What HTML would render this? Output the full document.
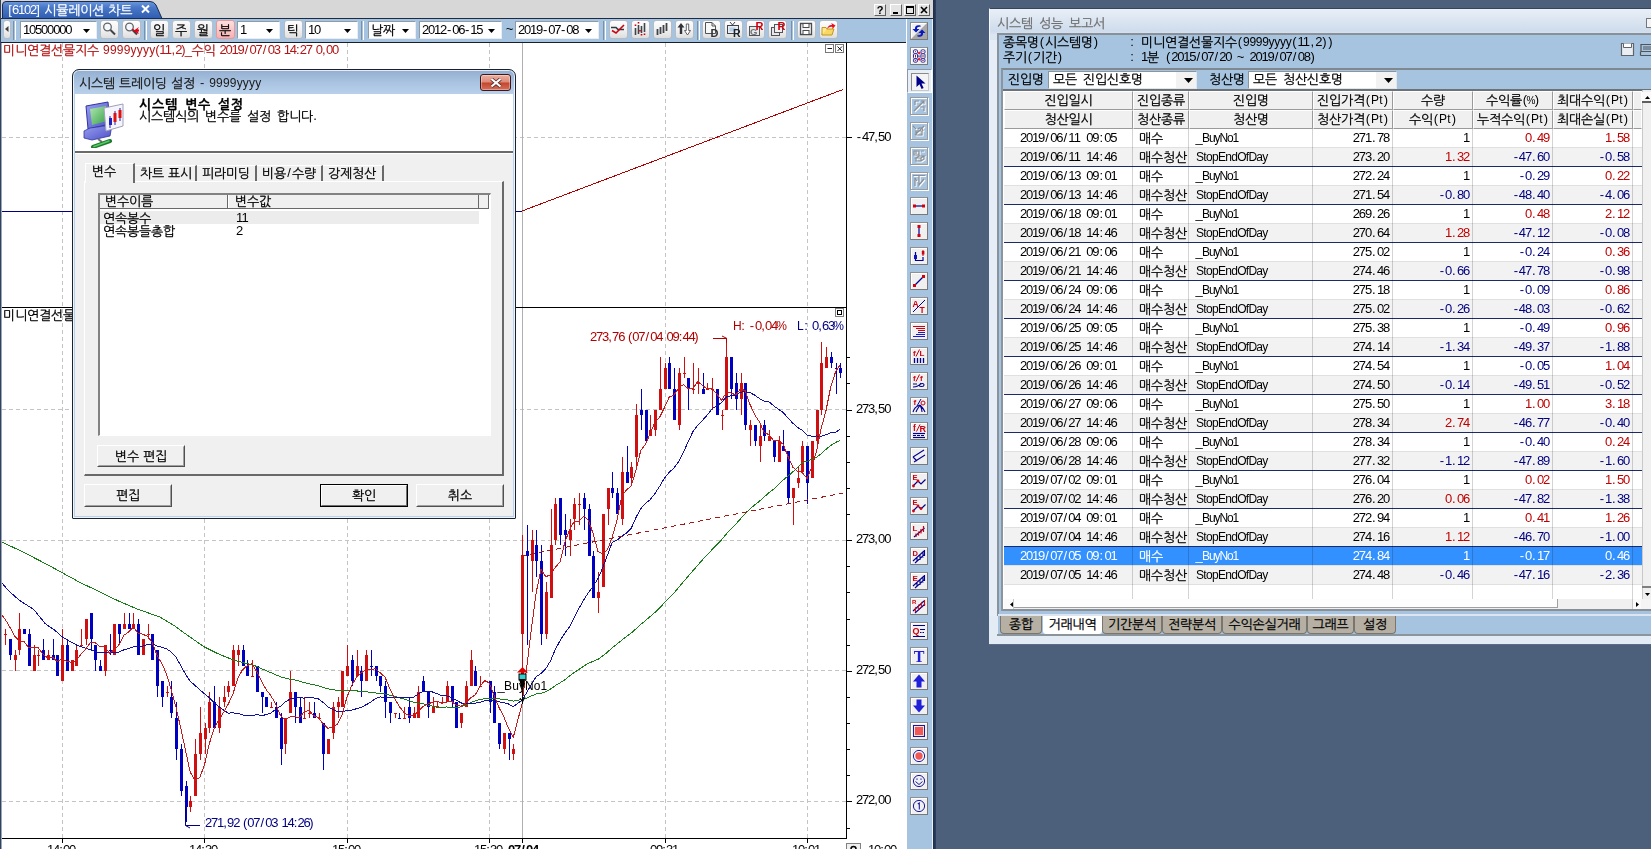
<!DOCTYPE html>
<html lang="ko"><head><meta charset="utf-8"><title>시뮬레이션 차트</title>
<style>
html,body{margin:0;padding:0}
body{width:1651px;height:849px;overflow:hidden;position:relative;background:#4c607b;font:13px/14px "Liberation Sans","NanumGothic",sans-serif;color:#000}
div,svg{position:absolute}
.t{white-space:nowrap;line-height:14px;height:14px}
.s0{letter-spacing:0.4px;position:relative;left:0.2px;top:-1px}.s1{letter-spacing:-1.2px;position:relative;top:-1px}.s2{letter-spacing:0.4px}.s3{letter-spacing:-0.22px;-webkit-text-stroke:.25px}.s4{letter-spacing:1.7px;position:relative;left:0.8px;top:-1px}.s5{letter-spacing:-0.6px;position:relative;left:-0.3px;top:-1px}.s6{font-size:12px;letter-spacing:0.2px;position:relative;top:-1px}.s7{letter-spacing:-0.3px;position:relative;left:-0.2px;top:-1px}.s8{letter-spacing:-0.8px;position:relative;top:-1px}.s9{letter-spacing:-1.2px;position:relative;left:-0.6px;top:-1px}.s10{letter-spacing:2.4px;position:relative;left:1.2px;top:-1px}.s11{font-size:12px;letter-spacing:-0.7px;position:relative;top:-1px}.s12{font-size:12px;letter-spacing:-1.7px;position:relative;left:-0.8px;top:-1px}.s13{font-size:12px;letter-spacing:0.3px;position:relative;top:-1px}.s14{font-size:12px;letter-spacing:0.1px;position:relative;top:-1px}.s15{letter-spacing:0.78px;-webkit-text-stroke:.25px}.s16{letter-spacing:3.4px}.s17{letter-spacing:2.4px}.s18{font-size:12px;letter-spacing:-0.3px;position:relative;top:-1px}.s19{letter-spacing:-1.6px;position:relative;left:-0.8px;top:-1px}.s20{font-size:10px;letter-spacing:-2.9px;position:relative;left:-1.4px;top:-1px}.s21{font-size:12px;letter-spacing:-1.1px;position:relative;top:-1px}
</style></head><body>

<div style="left:0px;top:0px;width:933px;height:19px;background:#d7d7d7"></div>
<div style="left:0px;top:18px;width:933px;height:1px;background:#1c2c44"></div>
<svg style="left:0;top:0" width="170" height="19"><defs><linearGradient id="tg" x1="0" y1="0" x2="0" y2="1"><stop offset="0" stop-color="#6c98dc"/><stop offset="0.35" stop-color="#4a78c8"/><stop offset="1" stop-color="#2f5cb0"/></linearGradient></defs><path d="M2.5 18.5V5Q2.5 1.5 6 1.5H150Q154 1.5 156 5L162 18.5Z" fill="url(#tg)" stroke="#1c2c50" stroke-width="1"/><path d="M142 5.5L149 12.5M149 5.5L142 12.5" stroke="#fff" stroke-width="2"/></svg>
<div class="t" style="left:8px;top:4px;color:#fff;"><span class="s0">[</span><span class="s1">6102</span><span class="s0">]</span><span class="s2"> </span><span class="s3">시뮬레이션</span><span class="s2"> </span><span class="s3">차트</span></div>
<div style="left:874px;top:4px;width:12px;height:12px;background:#e4e4e4;border:1px solid #fff;border-right-color:#606060;border-bottom-color:#606060;box-sizing:border-box"><svg style="left:0;top:0" width="11" height="11"><text x="5" y="9.2" font-size="11" font-weight="bold" text-anchor="middle" font-family="Liberation Sans,sans-serif">?</text></svg></div>
<div style="left:890px;top:4px;width:12px;height:12px;background:#e4e4e4;border:1px solid #fff;border-right-color:#606060;border-bottom-color:#606060;box-sizing:border-box"><div style="left:2px;top:7px;width:5px;height:2px;background:#000"></div></div>
<div style="left:904px;top:4px;width:12px;height:12px;background:#e4e4e4;border:1px solid #fff;border-right-color:#606060;border-bottom-color:#606060;box-sizing:border-box"><div style="left:1px;top:1px;width:8px;height:8px;border:1px solid #000;border-top-width:2px;box-sizing:border-box"></div></div>
<div style="left:918px;top:4px;width:12px;height:12px;background:#e4e4e4;border:1px solid #fff;border-right-color:#606060;border-bottom-color:#606060;box-sizing:border-box"><svg style="left:0;top:0" width="11" height="11"><path d="M2 2L8 8M8 2L2 8" stroke="#000" stroke-width="1.6"/></svg></div>
<div style="left:0px;top:19px;width:906px;height:23px;background:#a6c4e0"></div>
<div style="left:0px;top:42px;width:906px;height:1px;background:#14202c"></div>
<div style="left:0px;top:0px;width:1px;height:43px;background:#34425e"></div>
<div style="left:3px;top:20px;width:8px;height:19px;background:linear-gradient(#fdfdfd,#f2f2f2 50%,#dedede);border:1px solid #b4bcc6;border-radius:3px;box-sizing:border-box"><svg style="left:1px;top:5px" width="4" height="6"><path d="M3.5 0V6L0 3Z" fill="#404040"/></svg></div>
<div style="left:13px;top:21px;width:3px;height:19px;border-left:1px solid #7890a8;border-right:1px solid #fff;box-sizing:border-box"></div>
<div style="left:20px;top:21px;width:77px;height:18px;background:#fff;border:1px solid #e8eef4;border-top-color:#8e9aa6;border-left-color:#8e9aa6;box-sizing:border-box"></div>
<svg style="left:83px;top:29px" width="7" height="4"><path d="M0 0H7L3.5 4Z" fill="#000"/></svg>
<div class="t" style="left:23px;top:24px;color:#000;"><span class="s1">10500000</span></div>
<div style="left:100px;top:20px;width:19px;height:19px;background:linear-gradient(#fdfdfd,#f2f2f2 50%,#dedede);border:1px solid #b4bcc6;border-radius:3px;box-sizing:border-box"><svg style="left:0;top:0" width="16" height="16"><circle cx="6.5" cy="6" r="3.8" fill="#f4f8fc" stroke="#606468" stroke-width="1.3"/><path d="M9.5 9L14 13.5" stroke="#404448" stroke-width="2"/></svg></div>
<div style="left:122px;top:20px;width:19px;height:19px;background:linear-gradient(#fdfdfd,#f2f2f2 50%,#dedede);border:1px solid #b4bcc6;border-radius:3px;box-sizing:border-box"><svg style="left:0;top:0" width="16" height="16"><circle cx="6.5" cy="6" r="3.8" fill="#f4f8fc" stroke="#606468" stroke-width="1.3"/><path d="M9.5 9L14 13.5" stroke="#404448" stroke-width="2"/></svg><svg style="left:0;top:0" width="16" height="16"><path d="M16 6L11 9.5L16 13L14.5 10.5H17V8.5H14.5Z" fill="#e00010"/><path d="M9 8L15 12" stroke="#e00010" stroke-width="1.2"/></svg></div>
<div style="left:144px;top:21px;width:3px;height:19px;border-left:1px solid #7890a8;border-right:1px solid #fff;box-sizing:border-box"></div>
<div style="left:150px;top:20px;width:19px;height:19px;background:linear-gradient(#fbfbfb,#f0f0f0 50%,#dcdcdc);border:1px solid #b8c0c8;border-radius:3px;box-sizing:border-box"></div>
<div class="t" style="left:150px;top:24px;color:#000;width:18px;text-align:center;"><span class="s3">일</span></div>
<div style="left:172px;top:20px;width:19px;height:19px;background:linear-gradient(#fbfbfb,#f0f0f0 50%,#dcdcdc);border:1px solid #b8c0c8;border-radius:3px;box-sizing:border-box"></div>
<div class="t" style="left:172px;top:24px;color:#000;width:18px;text-align:center;"><span class="s3">주</span></div>
<div style="left:194px;top:20px;width:19px;height:19px;background:linear-gradient(#fbfbfb,#f0f0f0 50%,#dcdcdc);border:1px solid #b8c0c8;border-radius:3px;box-sizing:border-box"></div>
<div class="t" style="left:194px;top:24px;color:#000;width:18px;text-align:center;"><span class="s3">월</span></div>
<div style="left:216px;top:20px;width:19px;height:19px;background:linear-gradient(#fde0e0,#f8b0b0);border:1px solid #e89898;border-radius:3px;box-sizing:border-box"></div>
<div class="t" style="left:216px;top:24px;color:#000;width:18px;text-align:center;"><span class="s3">분</span></div>
<div style="left:237px;top:21px;width:43px;height:18px;background:#fff;border:1px solid #e8eef4;border-top-color:#8e9aa6;border-left-color:#8e9aa6;box-sizing:border-box"></div>
<svg style="left:266px;top:29px" width="7" height="4"><path d="M0 0H7L3.5 4Z" fill="#000"/></svg>
<div class="t" style="left:240px;top:24px;color:#000;"><span class="s1">1</span></div>
<div style="left:284px;top:20px;width:19px;height:19px;background:linear-gradient(#fdfdfd,#f2f2f2 50%,#dedede);border:1px solid #b4bcc6;border-radius:3px;box-sizing:border-box"></div>
<div class="t" style="left:284px;top:24px;color:#000;width:18px;text-align:center;"><span class="s3">틱</span></div>
<div style="left:305px;top:21px;width:53px;height:18px;background:#fff;border:1px solid #e8eef4;border-top-color:#8e9aa6;border-left-color:#8e9aa6;box-sizing:border-box"></div>
<svg style="left:344px;top:29px" width="7" height="4"><path d="M0 0H7L3.5 4Z" fill="#000"/></svg>
<div class="t" style="left:308px;top:24px;color:#000;"><span class="s1">10</span></div>
<div style="left:361px;top:21px;width:3px;height:19px;border-left:1px solid #7890a8;border-right:1px solid #fff;box-sizing:border-box"></div>
<div style="left:368px;top:21px;width:48px;height:18px;background:#fff;border:1px solid #e8eef4;border-top-color:#8e9aa6;border-left-color:#8e9aa6;box-sizing:border-box"></div>
<svg style="left:402px;top:29px" width="7" height="4"><path d="M0 0H7L3.5 4Z" fill="#000"/></svg>
<div class="t" style="left:371px;top:24px;color:#000;"><span class="s3">날짜</span></div>
<div style="left:419px;top:21px;width:83px;height:18px;background:#fff;border:1px solid #e8eef4;border-top-color:#8e9aa6;border-left-color:#8e9aa6;box-sizing:border-box"></div>
<svg style="left:488px;top:29px" width="7" height="4"><path d="M0 0H7L3.5 4Z" fill="#000"/></svg>
<div class="t" style="left:422px;top:24px;color:#000;"><span class="s1">2012</span><span class="s4">-</span><span class="s1">06</span><span class="s4">-</span><span class="s1">15</span></div>
<div class="t" style="left:506px;top:23px;color:#000;"><span class="s5">~</span></div>
<div style="left:515px;top:21px;width:84px;height:18px;background:#fff;border:1px solid #e8eef4;border-top-color:#8e9aa6;border-left-color:#8e9aa6;box-sizing:border-box"></div>
<svg style="left:585px;top:29px" width="7" height="4"><path d="M0 0H7L3.5 4Z" fill="#000"/></svg>
<div class="t" style="left:518px;top:24px;color:#000;"><span class="s1">2019</span><span class="s4">-</span><span class="s1">07</span><span class="s4">-</span><span class="s1">08</span></div>
<div style="left:603px;top:21px;width:3px;height:19px;border-left:1px solid #7890a8;border-right:1px solid #fff;box-sizing:border-box"></div>
<div style="left:697px;top:21px;width:3px;height:19px;border-left:1px solid #7890a8;border-right:1px solid #fff;box-sizing:border-box"></div>
<div style="left:791px;top:21px;width:3px;height:19px;border-left:1px solid #7890a8;border-right:1px solid #fff;box-sizing:border-box"></div>
<div style="left:609px;top:20px;width:19px;height:19px;background:linear-gradient(#fdfdfd,#f2f2f2 50%,#dedede);border:1px solid #b4bcc6;border-radius:3px;box-sizing:border-box"><svg style="left:0px;top:0px" width="16" height="16" viewBox="0 0 16 16"><path d="M1 6.5H6L8 8.5H14" stroke="#303840" stroke-width="1.6" fill="none"/><path d="M2 9.5L6 12L14 4" stroke="#d00010" stroke-width="1.6" fill="none"/></svg></div>
<div style="left:631px;top:20px;width:19px;height:19px;background:linear-gradient(#fdfdfd,#f2f2f2 50%,#dedede);border:1px solid #b4bcc6;border-radius:3px;box-sizing:border-box"><svg style="left:0px;top:0px" width="16" height="16" viewBox="0 0 16 16"><path d="M3.5 7V14M6.5 4V13M9.5 5V12M12.5 2V11" stroke="#404448" stroke-width="1.6"/><path d="M3.5 3.5v1.5M6.5 1v1.5M9.5 13v1.5M12.5 12.5v1.5M8 9v1.5" stroke="#d00010" stroke-width="1.6"/></svg></div>
<div style="left:653px;top:20px;width:19px;height:19px;background:linear-gradient(#fdfdfd,#f2f2f2 50%,#dedede);border:1px solid #b4bcc6;border-radius:3px;box-sizing:border-box"><svg style="left:0px;top:0px" width="16" height="16" viewBox="0 0 16 16"><path d="M3.5 8V14M6.5 6V13M9.5 4V12M12.5 2V10" stroke="#404448" stroke-width="1.8"/></svg></div>
<div style="left:675px;top:20px;width:19px;height:19px;background:linear-gradient(#fdfdfd,#f2f2f2 50%,#dedede);border:1px solid #b4bcc6;border-radius:3px;box-sizing:border-box"><svg style="left:0px;top:0px" width="16" height="16" viewBox="0 0 16 16"><path d="M5 2L1.5 6.5H3.8V13H6.2V6.5H8.5Z" fill="#303438"/><path d="M11.5 14L8.5 9.5H10.3V3H12.7V9.5H14.5Z" fill="#fff" stroke="#505458" stroke-width=".9"/></svg></div>
<div style="left:702px;top:20px;width:19px;height:19px;background:linear-gradient(#fdfdfd,#f2f2f2 50%,#dedede);border:1px solid #b4bcc6;border-radius:3px;box-sizing:border-box"><svg style="left:0px;top:0px" width="16" height="16" viewBox="0 0 16 16"><path d="M2.5 1.5H9L12.5 5V12.5H2.5Z" fill="#f8f8f8" stroke="#505458"/><path d="M9 1.5V5H12.5" fill="none" stroke="#505458"/><text x="7.5" y="15.5" font-size="11" fill="#303438" font-weight="bold" text-anchor="start" font-family="Liberation Sans,sans-serif">D</text></svg></div>
<div style="left:724px;top:20px;width:19px;height:19px;background:linear-gradient(#fdfdfd,#f2f2f2 50%,#dedede);border:1px solid #b4bcc6;border-radius:3px;box-sizing:border-box"><svg style="left:0px;top:0px" width="16" height="16" viewBox="0 0 16 16"><path d="M5 1L7.5 4L10 1" stroke="#404448" fill="none"/><rect x="2.5" y="4.5" width="11" height="8" fill="#e8eef4" stroke="#404448"/><rect x="4.5" y="6.5" width="6" height="4" fill="#b8d0e8"/><text x="8" y="16" font-size="10.5" fill="#202428" font-weight="bold" text-anchor="start" font-family="Liberation Sans,sans-serif">R</text></svg></div>
<div style="left:746px;top:20px;width:19px;height:19px;background:linear-gradient(#fdfdfd,#f2f2f2 50%,#dedede);border:1px solid #b4bcc6;border-radius:3px;box-sizing:border-box"><svg style="left:0px;top:0px" width="16" height="16" viewBox="0 0 16 16"><rect x="2.5" y="5.5" width="10" height="9" fill="#e8e8e8" stroke="#505458"/><text x="3" y="13.5" font-size="9.5" fill="#707478" font-weight="bold" text-anchor="start" font-family="Liberation Sans,sans-serif">G</text><text x="8.5" y="9" font-size="11" fill="#d00010" font-weight="bold" text-anchor="start" font-family="Liberation Sans,sans-serif">R</text></svg></div>
<div style="left:768px;top:20px;width:19px;height:19px;background:linear-gradient(#fdfdfd,#f2f2f2 50%,#dedede);border:1px solid #b4bcc6;border-radius:3px;box-sizing:border-box"><svg style="left:0px;top:0px" width="16" height="16" viewBox="0 0 16 16"><rect x="2.5" y="6.5" width="8" height="8" fill="#e8e8e8" stroke="#505458"/><rect x="5.5" y="3.5" width="8" height="8" fill="#f0f0f0" stroke="#505458"/><text x="8.5" y="9" font-size="11" fill="#d00010" font-weight="bold" text-anchor="start" font-family="Liberation Sans,sans-serif">R</text></svg></div>
<div style="left:797px;top:20px;width:19px;height:19px;background:linear-gradient(#fdfdfd,#f2f2f2 50%,#dedede);border:1px solid #b4bcc6;border-radius:3px;box-sizing:border-box"><svg style="left:0px;top:0px" width="16" height="16" viewBox="0 0 16 16"><path d="M2.5 2.5H13.5V13.5H2.5Z" fill="#f4f4f4" stroke="#484c50" stroke-width="1.3"/><rect x="5" y="2.5" width="6" height="4" fill="#fff" stroke="#484c50"/><rect x="5" y="9.5" width="6" height="4" fill="#fff" stroke="#484c50"/></svg></div>
<div style="left:819px;top:20px;width:19px;height:19px;background:linear-gradient(#fdfdfd,#f2f2f2 50%,#dedede);border:1px solid #b4bcc6;border-radius:3px;box-sizing:border-box"><svg style="left:0px;top:0px" width="16" height="16" viewBox="0 0 16 16"><path d="M2 14L3.5 8H14L12 14Z" fill="#f8d860" stroke="#c09010" stroke-width=".9"/><path d="M2 14V6.5H6L7 8" fill="#fce890" stroke="#c09010" stroke-width=".9"/><path d="M7 8C8 4.5 10 3.5 12 4L11.3 2L15.5 4.5L12.5 8L12.3 6C10.5 5.5 9 6 7 8Z" fill="#e8101c"/></svg></div>
<div style="left:906px;top:19px;width:27px;height:830px;background:#a6c4e0;border-left:1px solid #fff;border-right:1px solid #e8f0f8;box-sizing:border-box"></div>
<div style="left:933px;top:0px;width:3px;height:849px;background:linear-gradient(90deg,#1c2c48,#2c4060)"></div>
<div style="left:910px;top:22px;width:18px;height:18px;background:#f0f0f0;border:1px solid #909090;border-right-color:#787878;border-bottom-color:#787878;box-sizing:border-box;box-shadow:inset 1px 1px 0 #fff"><svg style="left:0px;top:0px" width="16" height="16" viewBox="0 0 16 16"><path d="M0 16L16 0V16Z" fill="#a8a8a8"/><path d="M9.5 2.5C6 1.5 3.5 3 4 6L1.5 6L5 9.5L8.5 6L6 6C6 4 7.5 3.5 9.5 4Z" fill="#0818c0"/><path d="M6.5 13.5C10 14.5 12.5 13 12 10L14.5 10L11 6.5L7.5 10L10 10C10 12 8.5 12.5 6.5 12Z" fill="#0818c0"/></svg></div>
<div style="left:910px;top:47px;width:18px;height:18px;background:#f0f0f0;border:1px solid #909090;border-right-color:#787878;border-bottom-color:#787878;box-sizing:border-box;box-shadow:inset 1px 1px 0 #fff"><svg style="left:0px;top:0px" width="16" height="16" viewBox="0 0 16 16"><g fill="#fff" stroke="#2a2a9c" stroke-width="1"><rect x="2.5" y="1.8" width="4" height="3.7" rx="1.3"/><rect x="2.5" y="5.8" width="4" height="4.7" rx="1"/><rect x="2.5" y="10.8" width="4" height="3.4" rx="1.3"/><rect x="10" y="1.8" width="4" height="3.7" rx="1.3"/><rect x="10" y="5.8" width="4" height="4.7" rx="1"/><rect x="10" y="10.8" width="4" height="3.4" rx="1.3"/></g><g stroke="#8a1c48" stroke-width="1" fill="none"><path d="M4.5 7V9.5M12 7V9.5M4 3.7h1M11.5 3.7h1M3.8 12L4.5 12.8L5.2 12M11.3 12L12 12.8L12.7 12"/></g><path d="M8.2 3.4L6.6 5L8.2 6.6ZM8.3 3.4L9.9 5L8.3 6.6ZM8.2 9.6L6.6 11.2L8.2 12.8ZM8.3 9.6L9.9 11.2L8.3 12.8Z" fill="#e01020"/><path d="M7.4 7.2V9.4M9.1 7.2V9.4M7.4 8.3H9.1" stroke="#5050b8" stroke-width=".7" fill="none"/></svg></div>
<div style="left:907px;top:69px;width:25px;height:24px;background:#e8eef6;border:1px solid #fff;border-left-color:#8c96a4;border-top-color:#8c96a4;box-sizing:border-box"></div>
<div style="left:911px;top:73px;width:18px;height:18px;background:#f4f4f4;border:1px solid #8a8a8a;border-right-color:#c8c8c8;border-bottom-color:#c8c8c8;box-sizing:border-box"><svg style="left:0px;top:0px" width="16" height="16" viewBox="0 0 16 16"><path d="M4.5 1.5V13L7.5 10.2L9.6 15L11.6 14.1L9.5 9.5H13.5Z" fill="#00008c"/></svg></div>
<div style="left:911px;top:98px;width:18px;height:18px;border:1px solid #fff;box-sizing:border-box"></div>
<div style="left:910px;top:97px;width:18px;height:18px;border:1px solid #9a9a9a;box-sizing:border-box"><svg style="left:0px;top:0px" width="16" height="16" viewBox="0 0 16 16"><g transform="translate(1,1)" stroke="#fff" fill="none" stroke-width="1.2"><path d="M3 13L13 3M4 3H8M4 3V7M9 9H13V13M10 3H13V6"/></g><g stroke="#8c9096" fill="none" stroke-width="1.2"><path d="M3 13L13 3M4 3H8M4 3V7M9 9H13V13M10 3H13V6"/></g></svg></div>
<div style="left:911px;top:123px;width:18px;height:18px;border:1px solid #fff;box-sizing:border-box"></div>
<div style="left:910px;top:122px;width:18px;height:18px;border:1px solid #9a9a9a;box-sizing:border-box"><svg style="left:0px;top:0px" width="16" height="16" viewBox="0 0 16 16"><g transform="translate(1,1)" stroke="#fff" fill="none" stroke-width="1.2"><path d="M2 3L5 6M13 3L4 12M5 8H11V12H5ZM7 6C9 4 12 5 12 8"/></g><g stroke="#8c9096" fill="none" stroke-width="1.2"><path d="M2 3L5 6M13 3L4 12M5 8H11V12H5ZM7 6C9 4 12 5 12 8"/></g></svg></div>
<div style="left:911px;top:148px;width:18px;height:18px;border:1px solid #fff;box-sizing:border-box"></div>
<div style="left:910px;top:147px;width:18px;height:18px;border:1px solid #9a9a9a;box-sizing:border-box"><svg style="left:0px;top:0px" width="16" height="16" viewBox="0 0 16 16"><g transform="translate(1,1)" stroke="#fff" fill="none" stroke-width="1.2"><path d="M3 3H8V7H3ZM5 3V6M10 3H13M5 10L8 8H13L10 10ZM5 10V13H10V10M10 13L13 11V8"/></g><g stroke="#8c9096" fill="none" stroke-width="1.2"><path d="M3 3H8V7H3ZM5 3V6M10 3H13M5 10L8 8H13L10 10ZM5 10V13H10V10M10 13L13 11V8"/></g></svg></div>
<div style="left:911px;top:173px;width:18px;height:18px;border:1px solid #fff;box-sizing:border-box"></div>
<div style="left:910px;top:172px;width:18px;height:18px;border:1px solid #9a9a9a;box-sizing:border-box"><svg style="left:0px;top:0px" width="16" height="16" viewBox="0 0 16 16"><g transform="translate(1,1)" stroke="#fff" fill="none" stroke-width="1.2"><path d="M2 2.5H14M4 13V5M4 5L6 8M8 3V12L13 6"/></g><g stroke="#8c9096" fill="none" stroke-width="1.2"><path d="M2 2.5H14M4 13V5M4 5L6 8M8 3V12L13 6"/></g></svg></div>
<div style="left:910px;top:197px;width:18px;height:18px;background:#f0f0f0;border:1px solid #909090;border-right-color:#787878;border-bottom-color:#787878;box-sizing:border-box;box-shadow:inset 1px 1px 0 #fff"><svg style="left:0px;top:0px" width="16" height="16" viewBox="0 0 16 16"><path d="M3 8H13" stroke="#000090" stroke-width="1.2"/><rect x="2" y="6.5" width="3" height="3" fill="#d00010"/><rect x="11" y="6.5" width="3" height="3" fill="#d00010"/></svg></div>
<div style="left:910px;top:222px;width:18px;height:18px;background:#f0f0f0;border:1px solid #909090;border-right-color:#787878;border-bottom-color:#787878;box-sizing:border-box;box-shadow:inset 1px 1px 0 #fff"><svg style="left:0px;top:0px" width="16" height="16" viewBox="0 0 16 16"><path d="M8 3V13" stroke="#000090" stroke-width="1.2"/><rect x="6.5" y="2" width="3" height="3" fill="#d00010"/><rect x="6.5" y="11" width="3" height="3" fill="#d00010"/></svg></div>
<div style="left:910px;top:247px;width:18px;height:18px;background:#f0f0f0;border:1px solid #909090;border-right-color:#787878;border-bottom-color:#787878;box-sizing:border-box;box-shadow:inset 1px 1px 0 #fff"><svg style="left:0px;top:0px" width="16" height="16" viewBox="0 0 16 16"><path d="M4.5 4V12.5H12V9" stroke="#000090" fill="none" stroke-width="1.2"/><rect x="3" y="7" width="3" height="4" fill="#1010c0"/><path d="M12 2V8" stroke="#d00010"/><rect x="10.8" y="3" width="2.6" height="3.5" fill="#d00010"/></svg></div>
<div style="left:910px;top:272px;width:18px;height:18px;background:#f0f0f0;border:1px solid #909090;border-right-color:#787878;border-bottom-color:#787878;box-sizing:border-box;box-shadow:inset 1px 1px 0 #fff"><svg style="left:0px;top:0px" width="16" height="16" viewBox="0 0 16 16"><path d="M3.5 12.5L12.5 3.5" stroke="#000090" stroke-width="1.2"/><rect x="2" y="11" width="3" height="3" fill="#d00010"/><rect x="11" y="2" width="3" height="3" fill="#d00010"/></svg></div>
<div style="left:910px;top:297px;width:18px;height:18px;background:#f0f0f0;border:1px solid #909090;border-right-color:#787878;border-bottom-color:#787878;box-sizing:border-box;box-shadow:inset 1px 1px 0 #fff"><svg style="left:0px;top:0px" width="16" height="16" viewBox="0 0 16 16"><path d="M2 14L14 2" stroke="#000090"/><text x="1.5" y="8.5" font-size="8.5" fill="#d00010" font-weight="bold" text-anchor="start" font-family="Liberation Sans,sans-serif">A</text><text x="8.5" y="14.5" font-size="8.5" fill="#d00010" font-weight="bold" text-anchor="start" font-family="Liberation Sans,sans-serif">T</text></svg></div>
<div style="left:910px;top:322px;width:18px;height:18px;background:#f0f0f0;border:1px solid #909090;border-right-color:#787878;border-bottom-color:#787878;box-sizing:border-box;box-shadow:inset 1px 1px 0 #fff"><svg style="left:0px;top:0px" width="16" height="16" viewBox="0 0 16 16"><path d="M2 3.5H14M5 5.5H14M7 7.5H14" stroke="#d00010" stroke-width="1.1"/><path d="M7 9.5H14M5 11.5H14M2 13.5H14" stroke="#1818d0" stroke-width="1.1"/></svg></div>
<div style="left:910px;top:347px;width:18px;height:18px;background:#f0f0f0;border:1px solid #909090;border-right-color:#787878;border-bottom-color:#787878;box-sizing:border-box;box-shadow:inset 1px 1px 0 #fff"><svg style="left:0px;top:0px" width="16" height="16" viewBox="0 0 16 16"><text x="2" y="8" font-size="8" fill="#d00010" font-weight="bold" text-anchor="start" font-family="Liberation Sans,sans-serif">f</text><path d="M5 8.5L8.5 1.5" stroke="#d00010"/><text x="8.5" y="8" font-size="8" fill="#d00010" font-weight="bold" text-anchor="start" font-family="Liberation Sans,sans-serif">L</text><path d="M3.5 10V15M6.5 10V15M9.5 10V15M12.5 10V15" stroke="#000090" stroke-width="1.3"/></svg></div>
<div style="left:910px;top:372px;width:18px;height:18px;background:#f0f0f0;border:1px solid #909090;border-right-color:#787878;border-bottom-color:#787878;box-sizing:border-box;box-shadow:inset 1px 1px 0 #fff"><svg style="left:0px;top:0px" width="16" height="16" viewBox="0 0 16 16"><text x="2" y="8" font-size="8" fill="#d00010" font-weight="bold" text-anchor="start" font-family="Liberation Sans,sans-serif">f</text><path d="M5 8.5L8.5 1.5" stroke="#d00010"/><text x="9" y="8" font-size="8" fill="#d00010" font-weight="bold" text-anchor="start" font-family="Liberation Sans,sans-serif">f</text><path d="M2 11H6M2 14C6 14 8 13 10 10M8 12.5C10 10 13 10 13 12C13 14 9 14 8 12.5" stroke="#000090" fill="none" stroke-width="1.1"/></svg></div>
<div style="left:910px;top:397px;width:18px;height:18px;background:#f0f0f0;border:1px solid #909090;border-right-color:#787878;border-bottom-color:#787878;box-sizing:border-box;box-shadow:inset 1px 1px 0 #fff"><svg style="left:0px;top:0px" width="16" height="16" viewBox="0 0 16 16"><text x="2.5" y="7" font-size="8" fill="#d00010" font-weight="bold" text-anchor="start" font-family="Liberation Sans,sans-serif">f</text><path d="M6 8L10 1" stroke="#000090"/><circle cx="12" cy="5" r="2" fill="none" stroke="#d00010"/><path d="M2 14C3 10 6 8 9 7M5 14C6 11 8 9 9 7M9 7C11 9 13 11 14 14M9 7C10 9 11 11 11 14" stroke="#000090" fill="none" stroke-width="1.1"/></svg></div>
<div style="left:910px;top:422px;width:18px;height:18px;background:#f0f0f0;border:1px solid #909090;border-right-color:#787878;border-bottom-color:#787878;box-sizing:border-box;box-shadow:inset 1px 1px 0 #fff"><svg style="left:0px;top:0px" width="16" height="16" viewBox="0 0 16 16"><text x="2" y="8" font-size="8.5" fill="#d00010" font-weight="bold" text-anchor="start" font-family="Liberation Sans,sans-serif">f</text><path d="M5.5 8.5L9 1.5" stroke="#d00010"/><text x="8.5" y="8.5" font-size="9" fill="#d00010" font-weight="bold" text-anchor="start" font-family="Liberation Sans,sans-serif">R</text><path d="M2 10.5H14" stroke="#000090" stroke-width="1.2"/><path d="M2 12.5H14" stroke="#000090" stroke-dasharray="3 1"/><path d="M2 14.5H14" stroke="#000090" stroke-width="1.2"/></svg></div>
<div style="left:910px;top:447px;width:18px;height:18px;background:#f0f0f0;border:1px solid #909090;border-right-color:#787878;border-bottom-color:#787878;box-sizing:border-box;box-shadow:inset 1px 1px 0 #fff"><svg style="left:0px;top:0px" width="16" height="16" viewBox="0 0 16 16"><path d="M2 9L13 2M3 14L14 7M2 9L6 13" stroke="#000090" fill="none" stroke-width="1.1"/></svg></div>
<div style="left:910px;top:472px;width:18px;height:18px;background:#f0f0f0;border:1px solid #909090;border-right-color:#787878;border-bottom-color:#787878;box-sizing:border-box;box-shadow:inset 1px 1px 0 #fff"><svg style="left:0px;top:0px" width="16" height="16" viewBox="0 0 16 16"><text x="1.5" y="7" font-size="7.5" fill="#d00010" font-weight="bold" text-anchor="start" font-family="Liberation Sans,sans-serif">E</text><path d="M2 13L7 8L10 11L14.5 6.5" stroke="#000090" fill="none" stroke-width="1.2"/><circle cx="2.5" cy="13" r="1.4" fill="#d00010"/><circle cx="7" cy="8" r="1.4" fill="#d00010"/></svg></div>
<div style="left:910px;top:497px;width:18px;height:18px;background:#f0f0f0;border:1px solid #909090;border-right-color:#787878;border-bottom-color:#787878;box-sizing:border-box;box-shadow:inset 1px 1px 0 #fff"><svg style="left:0px;top:0px" width="16" height="16" viewBox="0 0 16 16"><text x="1.5" y="7" font-size="7.5" fill="#d00010" font-weight="bold" text-anchor="start" font-family="Liberation Sans,sans-serif">E</text><path d="M2 13L7 8L10 11L14.5 6.5" stroke="#000090" fill="none" stroke-width="1.2"/><circle cx="2.5" cy="13" r="1.4" fill="#d00010"/><circle cx="7" cy="8" r="1.4" fill="#d00010"/><circle cx="10" cy="10.5" r="1.4" fill="#d00010"/></svg></div>
<div style="left:910px;top:522px;width:18px;height:18px;background:#f0f0f0;border:1px solid #909090;border-right-color:#787878;border-bottom-color:#787878;box-sizing:border-box;box-shadow:inset 1px 1px 0 #fff"><svg style="left:0px;top:0px" width="16" height="16" viewBox="0 0 16 16"><text x="1.5" y="8" font-size="8" fill="#d00010" font-weight="bold" text-anchor="start" font-family="Liberation Sans,sans-serif">L</text><path d="M3 14L13.5 5" stroke="#000090" stroke-width="1.1"/><path d="M5 10.5V14M7.5 8.5V12.5M10 6V10.5M12.5 3V9" stroke="#d00010" stroke-width="1.2"/></svg></div>
<div style="left:910px;top:547px;width:18px;height:18px;background:#f0f0f0;border:1px solid #909090;border-right-color:#787878;border-bottom-color:#787878;box-sizing:border-box;box-shadow:inset 1px 1px 0 #fff"><svg style="left:0px;top:0px" width="16" height="16" viewBox="0 0 16 16"><text x="1.5" y="7.5" font-size="7.5" fill="#d00010" font-weight="bold" text-anchor="start" font-family="Liberation Sans,sans-serif">D</text><path d="M2 13L13 3M4 15L14 6M6 9.5V14M9 7V12M12 4V9.5M13.5 2V8" stroke="#000090" stroke-width="1.1" fill="none"/></svg></div>
<div style="left:910px;top:572px;width:18px;height:18px;background:#f0f0f0;border:1px solid #909090;border-right-color:#787878;border-bottom-color:#787878;box-sizing:border-box;box-shadow:inset 1px 1px 0 #fff"><svg style="left:0px;top:0px" width="16" height="16" viewBox="0 0 16 16"><text x="1.5" y="7.5" font-size="8" fill="#d00010" font-weight="bold" text-anchor="start" font-family="Liberation Sans,sans-serif">E</text><path d="M2 13L13 3M4 15L14 6M6 9.5V14M9 7V12M12 4V9.5M13.5 2V8" stroke="#000090" stroke-width="1.1" fill="none"/></svg></div>
<div style="left:910px;top:597px;width:18px;height:18px;background:#f0f0f0;border:1px solid #909090;border-right-color:#787878;border-bottom-color:#787878;box-sizing:border-box;box-shadow:inset 1px 1px 0 #fff"><svg style="left:0px;top:0px" width="16" height="16" viewBox="0 0 16 16"><text x="1" y="6" font-size="6" fill="#d00010" font-weight="bold" text-anchor="start" font-family="Liberation Sans,sans-serif">R</text><path d="M2 13L13 3M4 15L14 6" stroke="#000090" stroke-width="1.1"/><path d="M5 9C4 11 4 13 5 14M8 6.5C7 9 7 11 8 12M11 4C10 6 10 8 11 9.5M13.5 2V8" stroke="#d00010" stroke-width="1.1" fill="none"/></svg></div>
<div style="left:910px;top:622px;width:18px;height:18px;background:#f0f0f0;border:1px solid #909090;border-right-color:#787878;border-bottom-color:#787878;box-sizing:border-box;box-shadow:inset 1px 1px 0 #fff"><svg style="left:0px;top:0px" width="16" height="16" viewBox="0 0 16 16"><path d="M2 2.5H14M2 13.5H14" stroke="#000090" stroke-width="1.2"/><text x="1.5" y="11" font-size="9" fill="#d00010" font-weight="bold" text-anchor="start" font-family="Liberation Sans,sans-serif">Q</text><path d="M9 6.5H14" stroke="#000090"/><path d="M9 9.5H14" stroke="#000090" stroke-dasharray="1.5 1"/></svg></div>
<div style="left:910px;top:647px;width:18px;height:18px;background:#f0f0f0;border:1px solid #909090;border-right-color:#787878;border-bottom-color:#787878;box-sizing:border-box;box-shadow:inset 1px 1px 0 #fff"><svg style="left:0px;top:0px" width="16" height="16" viewBox="0 0 16 16"><text x="8" y="14" font-size="16" font-weight="bold" fill="#2020d8" text-anchor="middle" font-family="Liberation Serif,serif">T</text></svg></div>
<div style="left:910px;top:672px;width:18px;height:18px;background:#f0f0f0;border:1px solid #909090;border-right-color:#787878;border-bottom-color:#787878;box-sizing:border-box;box-shadow:inset 1px 1px 0 #fff"><svg style="left:0px;top:0px" width="16" height="16" viewBox="0 0 16 16"><path d="M8 1.5L2 8.5H5.5V14.5H10.5V8.5H14Z" fill="#2020d8"/></svg></div>
<div style="left:910px;top:697px;width:18px;height:18px;background:#f0f0f0;border:1px solid #909090;border-right-color:#787878;border-bottom-color:#787878;box-sizing:border-box;box-shadow:inset 1px 1px 0 #fff"><svg style="left:0px;top:0px" width="16" height="16" viewBox="0 0 16 16"><path d="M8 14.5L2 7.5H5.5V1.5H10.5V7.5H14Z" fill="#2020d8"/></svg></div>
<div style="left:910px;top:722px;width:18px;height:18px;background:#f0f0f0;border:1px solid #909090;border-right-color:#787878;border-bottom-color:#787878;box-sizing:border-box;box-shadow:inset 1px 1px 0 #fff"><svg style="left:0px;top:0px" width="16" height="16" viewBox="0 0 16 16"><rect x="2.5" y="2.5" width="11" height="11" fill="#f05858" stroke="#1818a0"/><rect x="3.5" y="3.5" width="9" height="9" fill="none" stroke="#fff" stroke-width=".8"/></svg></div>
<div style="left:910px;top:747px;width:18px;height:18px;background:#f0f0f0;border:1px solid #909090;border-right-color:#787878;border-bottom-color:#787878;box-sizing:border-box;box-shadow:inset 1px 1px 0 #fff"><svg style="left:0px;top:0px" width="16" height="16" viewBox="0 0 16 16"><circle cx="8" cy="8" r="5.6" fill="#fff" stroke="#1818a0"/><circle cx="8" cy="8" r="3.7" fill="#f05858"/></svg></div>
<div style="left:910px;top:772px;width:18px;height:18px;background:#f0f0f0;border:1px solid #909090;border-right-color:#787878;border-bottom-color:#787878;box-sizing:border-box;box-shadow:inset 1px 1px 0 #fff"><svg style="left:0px;top:0px" width="16" height="16" viewBox="0 0 16 16"><circle cx="8" cy="8" r="5.6" fill="none" stroke="#1818a0"/><path d="M4.5 8.5L8 11.5L11.5 8.5" fill="none" stroke="#1818a0"/><path d="M6 5.5v1.2M10 5.5v1.2" stroke="#1818a0" stroke-width="1.2"/></svg></div>
<div style="left:910px;top:797px;width:18px;height:18px;background:#f0f0f0;border:1px solid #909090;border-right-color:#787878;border-bottom-color:#787878;box-sizing:border-box;box-shadow:inset 1px 1px 0 #fff"><svg style="left:0px;top:0px" width="16" height="16" viewBox="0 0 16 16"><circle cx="8" cy="8" r="5.6" fill="none" stroke="#1818a0"/><path d="M6.8 6L8.3 5V11.5" fill="none" stroke="#1818a0" stroke-width="1.1"/></svg></div>
<svg style="left:0;top:43px" width="906" height="806" viewBox="0 43 906 806"><rect x="0" y="43" width="906" height="806" fill="#fff"/><rect x="0" y="43" width="1" height="806" fill="#34425e"/><rect x="1" y="43" width="1" height="806" fill="#9aa6bc"/><g stroke="#c4c4c4" stroke-width="1" stroke-dasharray="4 3" shape-rendering="crispEdges"><line x1="62.5" y1="43" x2="62.5" y2="838"/><line x1="204.5" y1="43" x2="204.5" y2="838"/><line x1="347.5" y1="43" x2="347.5" y2="838"/><line x1="489.5" y1="43" x2="489.5" y2="838"/><line x1="665.5" y1="43" x2="665.5" y2="838"/><line x1="807.5" y1="43" x2="807.5" y2="838"/><line x1="2" y1="137.5" x2="846" y2="137.5"/><line x1="2" y1="409.5" x2="846" y2="409.5"/><line x1="2" y1="540.5" x2="846" y2="540.5"/><line x1="2" y1="670.5" x2="846" y2="670.5"/><line x1="2" y1="801.5" x2="846" y2="801.5"/></g><line x1="522.5" y1="43" x2="522.5" y2="838" stroke="#b0b0b0" shape-rendering="crispEdges"/><g fill="#000" shape-rendering="crispEdges"><rect x="846" y="43" width="1" height="796"/><rect x="2" y="838" width="845" height="1"/><rect x="2" y="307" width="845" height="1"/><rect x="847" y="828" width="3" height="1"/><rect x="847" y="801" width="5" height="1"/><rect x="847" y="775" width="3" height="1"/><rect x="847" y="749" width="3" height="1"/><rect x="847" y="723" width="3" height="1"/><rect x="847" y="697" width="3" height="1"/><rect x="847" y="671" width="5" height="1"/><rect x="847" y="645" width="3" height="1"/><rect x="847" y="619" width="3" height="1"/><rect x="847" y="592" width="3" height="1"/><rect x="847" y="566" width="3" height="1"/><rect x="847" y="540" width="5" height="1"/><rect x="847" y="514" width="3" height="1"/><rect x="847" y="488" width="3" height="1"/><rect x="847" y="462" width="3" height="1"/><rect x="847" y="436" width="3" height="1"/><rect x="847" y="410" width="5" height="1"/><rect x="847" y="383" width="3" height="1"/><rect x="847" y="357" width="3" height="1"/><rect x="847" y="137" width="5" height="1"/><rect x="62" y="839" width="1" height="4"/><rect x="204" y="839" width="1" height="4"/><rect x="347" y="839" width="1" height="4"/><rect x="489" y="839" width="1" height="4"/><rect x="522" y="839" width="1" height="4"/><rect x="665" y="839" width="1" height="4"/><rect x="807" y="839" width="1" height="4"/></g><line x1="2" y1="211.5" x2="522" y2="211.5" stroke="#000080" shape-rendering="crispEdges"/><line x1="522" y1="211" x2="843" y2="89.5" stroke="#b00000" stroke-width="1" shape-rendering="crispEdges"/><g shape-rendering="crispEdges"><rect x="5" y="629" width="1" height="16" fill="#d01010"/><rect x="4" y="634" width="3" height="1" fill="#d01010"/><rect x="10" y="639" width="1" height="21" fill="#0000c0"/><rect x="9" y="639" width="3" height="16" fill="#0000c0"/><rect x="15" y="650" width="1" height="21" fill="#d01010"/><rect x="14" y="655" width="3" height="5" fill="#d01010"/><rect x="19" y="613" width="1" height="42" fill="#d01010"/><rect x="18" y="629" width="3" height="21" fill="#d01010"/><rect x="24" y="629" width="1" height="5" fill="#0000c0"/><rect x="23" y="629" width="3" height="5" fill="#0000c0"/><rect x="29" y="629" width="1" height="37" fill="#0000c0"/><rect x="28" y="634" width="3" height="32" fill="#0000c0"/><rect x="34" y="645" width="1" height="26" fill="#d01010"/><rect x="33" y="655" width="3" height="16" fill="#d01010"/><rect x="38" y="650" width="1" height="16" fill="#d01010"/><rect x="37" y="655" width="3" height="1" fill="#d01010"/><rect x="43" y="639" width="1" height="21" fill="#0000c0"/><rect x="42" y="650" width="3" height="10" fill="#0000c0"/><rect x="48" y="650" width="1" height="10" fill="#d01010"/><rect x="47" y="655" width="3" height="5" fill="#d01010"/><rect x="53" y="639" width="1" height="21" fill="#0000c0"/><rect x="52" y="655" width="3" height="5" fill="#0000c0"/><rect x="57" y="655" width="1" height="21" fill="#0000c0"/><rect x="56" y="655" width="3" height="21" fill="#0000c0"/><rect x="62" y="629" width="1" height="52" fill="#d01010"/><rect x="61" y="645" width="3" height="36" fill="#d01010"/><rect x="67" y="639" width="1" height="32" fill="#0000c0"/><rect x="66" y="645" width="3" height="26" fill="#0000c0"/><rect x="72" y="660" width="1" height="11" fill="#d01010"/><rect x="71" y="660" width="3" height="11" fill="#d01010"/><rect x="76" y="645" width="1" height="21" fill="#d01010"/><rect x="75" y="650" width="3" height="16" fill="#d01010"/><rect x="81" y="629" width="1" height="16" fill="#d01010"/><rect x="80" y="645" width="3" height="1" fill="#d01010"/><rect x="86" y="619" width="1" height="26" fill="#d01010"/><rect x="85" y="619" width="3" height="20" fill="#d01010"/><rect x="91" y="613" width="1" height="37" fill="#0000c0"/><rect x="90" y="613" width="3" height="26" fill="#0000c0"/><rect x="95" y="645" width="1" height="26" fill="#0000c0"/><rect x="94" y="645" width="3" height="15" fill="#0000c0"/><rect x="100" y="660" width="1" height="11" fill="#0000c0"/><rect x="99" y="666" width="3" height="5" fill="#0000c0"/><rect x="105" y="645" width="1" height="31" fill="#d01010"/><rect x="104" y="645" width="3" height="26" fill="#d01010"/><rect x="110" y="634" width="1" height="21" fill="#0000c0"/><rect x="109" y="650" width="3" height="1" fill="#0000c0"/><rect x="114" y="624" width="1" height="31" fill="#d01010"/><rect x="113" y="624" width="3" height="31" fill="#d01010"/><rect x="119" y="624" width="1" height="21" fill="#0000c0"/><rect x="118" y="624" width="3" height="10" fill="#0000c0"/><rect x="124" y="613" width="1" height="16" fill="#d01010"/><rect x="123" y="624" width="3" height="5" fill="#d01010"/><rect x="129" y="613" width="1" height="16" fill="#0000c0"/><rect x="128" y="624" width="3" height="5" fill="#0000c0"/><rect x="133" y="613" width="1" height="16" fill="#d01010"/><rect x="132" y="624" width="3" height="5" fill="#d01010"/><rect x="138" y="619" width="1" height="36" fill="#0000c0"/><rect x="137" y="624" width="3" height="31" fill="#0000c0"/><rect x="143" y="639" width="1" height="16" fill="#d01010"/><rect x="142" y="639" width="3" height="16" fill="#d01010"/><rect x="148" y="624" width="1" height="15" fill="#d01010"/><rect x="147" y="634" width="3" height="1" fill="#d01010"/><rect x="152" y="634" width="1" height="26" fill="#0000c0"/><rect x="151" y="634" width="3" height="26" fill="#0000c0"/><rect x="157" y="650" width="1" height="47" fill="#0000c0"/><rect x="156" y="650" width="3" height="36" fill="#0000c0"/><rect x="162" y="681" width="1" height="26" fill="#0000c0"/><rect x="161" y="681" width="3" height="16" fill="#0000c0"/><rect x="167" y="686" width="1" height="11" fill="#d01010"/><rect x="166" y="692" width="3" height="1" fill="#d01010"/><rect x="171" y="681" width="1" height="37" fill="#0000c0"/><rect x="170" y="697" width="3" height="16" fill="#0000c0"/><rect x="176" y="702" width="1" height="58" fill="#0000c0"/><rect x="175" y="718" width="3" height="31" fill="#0000c0"/><rect x="181" y="744" width="1" height="52" fill="#0000c0"/><rect x="180" y="749" width="3" height="42" fill="#0000c0"/><rect x="186" y="781" width="1" height="41" fill="#0000c0"/><rect x="185" y="786" width="3" height="21" fill="#0000c0"/><rect x="190" y="796" width="1" height="16" fill="#d01010"/><rect x="189" y="801" width="3" height="6" fill="#d01010"/><rect x="195" y="739" width="1" height="57" fill="#d01010"/><rect x="194" y="754" width="3" height="42" fill="#d01010"/><rect x="200" y="707" width="1" height="53" fill="#d01010"/><rect x="199" y="733" width="3" height="21" fill="#d01010"/><rect x="205" y="723" width="1" height="31" fill="#d01010"/><rect x="204" y="728" width="3" height="11" fill="#d01010"/><rect x="209" y="692" width="1" height="41" fill="#d01010"/><rect x="208" y="702" width="3" height="26" fill="#d01010"/><rect x="214" y="686" width="1" height="42" fill="#0000c0"/><rect x="213" y="702" width="3" height="26" fill="#0000c0"/><rect x="219" y="697" width="1" height="36" fill="#d01010"/><rect x="218" y="707" width="3" height="21" fill="#d01010"/><rect x="224" y="686" width="1" height="21" fill="#d01010"/><rect x="223" y="697" width="3" height="5" fill="#d01010"/><rect x="228" y="681" width="1" height="16" fill="#d01010"/><rect x="227" y="686" width="3" height="6" fill="#d01010"/><rect x="233" y="645" width="1" height="41" fill="#d01010"/><rect x="232" y="650" width="3" height="36" fill="#d01010"/><rect x="238" y="645" width="1" height="21" fill="#d01010"/><rect x="237" y="650" width="3" height="5" fill="#d01010"/><rect x="243" y="645" width="1" height="21" fill="#0000c0"/><rect x="242" y="650" width="3" height="16" fill="#0000c0"/><rect x="247" y="660" width="1" height="16" fill="#0000c0"/><rect x="246" y="666" width="3" height="10" fill="#0000c0"/><rect x="252" y="660" width="1" height="16" fill="#d01010"/><rect x="251" y="676" width="3" height="1" fill="#d01010"/><rect x="257" y="666" width="1" height="26" fill="#0000c0"/><rect x="256" y="666" width="3" height="26" fill="#0000c0"/><rect x="262" y="692" width="1" height="21" fill="#0000c0"/><rect x="261" y="692" width="3" height="5" fill="#0000c0"/><rect x="266" y="697" width="1" height="10" fill="#0000c0"/><rect x="265" y="697" width="3" height="10" fill="#0000c0"/><rect x="271" y="702" width="1" height="5" fill="#d01010"/><rect x="270" y="707" width="3" height="1" fill="#d01010"/><rect x="276" y="702" width="1" height="16" fill="#0000c0"/><rect x="275" y="707" width="3" height="11" fill="#0000c0"/><rect x="281" y="713" width="1" height="52" fill="#0000c0"/><rect x="280" y="718" width="3" height="31" fill="#0000c0"/><rect x="285" y="718" width="1" height="36" fill="#d01010"/><rect x="284" y="718" width="3" height="26" fill="#d01010"/><rect x="290" y="671" width="1" height="42" fill="#d01010"/><rect x="289" y="692" width="3" height="21" fill="#d01010"/><rect x="295" y="692" width="1" height="31" fill="#0000c0"/><rect x="294" y="692" width="3" height="15" fill="#0000c0"/><rect x="300" y="697" width="1" height="26" fill="#0000c0"/><rect x="299" y="707" width="3" height="16" fill="#0000c0"/><rect x="304" y="697" width="1" height="21" fill="#d01010"/><rect x="303" y="718" width="3" height="1" fill="#d01010"/><rect x="309" y="702" width="1" height="16" fill="#d01010"/><rect x="308" y="713" width="3" height="1" fill="#d01010"/><rect x="314" y="702" width="1" height="16" fill="#0000c0"/><rect x="313" y="713" width="3" height="5" fill="#0000c0"/><rect x="319" y="713" width="1" height="5" fill="#d01010"/><rect x="318" y="718" width="3" height="1" fill="#d01010"/><rect x="323" y="723" width="1" height="47" fill="#0000c0"/><rect x="322" y="723" width="3" height="31" fill="#0000c0"/><rect x="328" y="739" width="1" height="15" fill="#d01010"/><rect x="327" y="739" width="3" height="15" fill="#d01010"/><rect x="333" y="702" width="1" height="37" fill="#d01010"/><rect x="332" y="707" width="3" height="26" fill="#d01010"/><rect x="338" y="697" width="1" height="21" fill="#d01010"/><rect x="337" y="702" width="3" height="5" fill="#d01010"/><rect x="342" y="671" width="1" height="36" fill="#d01010"/><rect x="341" y="671" width="3" height="36" fill="#d01010"/><rect x="347" y="645" width="1" height="31" fill="#d01010"/><rect x="346" y="666" width="3" height="10" fill="#d01010"/><rect x="352" y="655" width="1" height="31" fill="#0000c0"/><rect x="351" y="660" width="3" height="21" fill="#0000c0"/><rect x="357" y="650" width="1" height="26" fill="#d01010"/><rect x="356" y="666" width="3" height="10" fill="#d01010"/><rect x="361" y="666" width="1" height="31" fill="#0000c0"/><rect x="360" y="671" width="3" height="10" fill="#0000c0"/><rect x="366" y="650" width="1" height="31" fill="#d01010"/><rect x="365" y="655" width="3" height="26" fill="#d01010"/><rect x="371" y="650" width="1" height="26" fill="#0000c0"/><rect x="370" y="666" width="3" height="1" fill="#0000c0"/><rect x="376" y="666" width="1" height="15" fill="#0000c0"/><rect x="375" y="666" width="3" height="10" fill="#0000c0"/><rect x="380" y="676" width="1" height="16" fill="#0000c0"/><rect x="379" y="676" width="3" height="10" fill="#0000c0"/><rect x="385" y="681" width="1" height="37" fill="#0000c0"/><rect x="384" y="686" width="3" height="16" fill="#0000c0"/><rect x="390" y="702" width="1" height="21" fill="#0000c0"/><rect x="389" y="702" width="3" height="11" fill="#0000c0"/><rect x="395" y="713" width="1" height="5" fill="#d01010"/><rect x="394" y="713" width="3" height="1" fill="#d01010"/><rect x="399" y="713" width="1" height="5" fill="#0000c0"/><rect x="398" y="718" width="3" height="1" fill="#0000c0"/><rect x="404" y="707" width="1" height="11" fill="#d01010"/><rect x="403" y="718" width="3" height="1" fill="#d01010"/><rect x="409" y="697" width="1" height="26" fill="#0000c0"/><rect x="408" y="707" width="3" height="11" fill="#0000c0"/><rect x="414" y="707" width="1" height="11" fill="#d01010"/><rect x="413" y="713" width="3" height="5" fill="#d01010"/><rect x="418" y="686" width="1" height="32" fill="#d01010"/><rect x="417" y="692" width="3" height="26" fill="#d01010"/><rect x="423" y="676" width="1" height="16" fill="#0000c0"/><rect x="422" y="681" width="3" height="11" fill="#0000c0"/><rect x="428" y="692" width="1" height="26" fill="#0000c0"/><rect x="427" y="692" width="3" height="15" fill="#0000c0"/><rect x="433" y="697" width="1" height="16" fill="#d01010"/><rect x="432" y="707" width="3" height="6" fill="#d01010"/><rect x="437" y="702" width="1" height="5" fill="#d01010"/><rect x="436" y="707" width="3" height="1" fill="#d01010"/><rect x="442" y="697" width="1" height="5" fill="#d01010"/><rect x="441" y="702" width="3" height="1" fill="#d01010"/><rect x="447" y="681" width="1" height="21" fill="#d01010"/><rect x="446" y="686" width="3" height="16" fill="#d01010"/><rect x="452" y="686" width="1" height="21" fill="#0000c0"/><rect x="451" y="686" width="3" height="16" fill="#0000c0"/><rect x="456" y="702" width="1" height="26" fill="#0000c0"/><rect x="455" y="702" width="3" height="26" fill="#0000c0"/><rect x="461" y="713" width="1" height="15" fill="#d01010"/><rect x="460" y="713" width="3" height="10" fill="#d01010"/><rect x="466" y="681" width="1" height="26" fill="#d01010"/><rect x="465" y="686" width="3" height="21" fill="#d01010"/><rect x="471" y="650" width="1" height="36" fill="#d01010"/><rect x="470" y="660" width="3" height="26" fill="#d01010"/><rect x="475" y="666" width="1" height="20" fill="#0000c0"/><rect x="474" y="671" width="3" height="15" fill="#0000c0"/><rect x="480" y="676" width="1" height="10" fill="#d01010"/><rect x="479" y="686" width="3" height="1" fill="#d01010"/><rect x="485" y="681" width="1" height="1" fill="#d01010"/><rect x="484" y="681" width="3" height="1" fill="#d01010"/><rect x="490" y="681" width="1" height="32" fill="#0000c0"/><rect x="489" y="681" width="3" height="21" fill="#0000c0"/><rect x="494" y="686" width="1" height="37" fill="#0000c0"/><rect x="493" y="692" width="3" height="31" fill="#0000c0"/><rect x="499" y="723" width="1" height="26" fill="#0000c0"/><rect x="498" y="723" width="3" height="21" fill="#0000c0"/><rect x="504" y="733" width="1" height="21" fill="#d01010"/><rect x="503" y="733" width="3" height="16" fill="#d01010"/><rect x="509" y="733" width="1" height="27" fill="#0000c0"/><rect x="508" y="733" width="3" height="6" fill="#0000c0"/><rect x="513" y="744" width="1" height="16" fill="#d01010"/><rect x="512" y="749" width="3" height="5" fill="#d01010"/><rect x="522" y="535" width="1" height="162" fill="#d01010"/><rect x="521" y="556" width="3" height="78" fill="#d01010"/><rect x="527" y="525" width="1" height="120" fill="#0000c0"/><rect x="526" y="551" width="3" height="5" fill="#0000c0"/><rect x="532" y="530" width="1" height="62" fill="#d01010"/><rect x="531" y="540" width="3" height="21" fill="#d01010"/><rect x="536" y="530" width="1" height="47" fill="#0000c0"/><rect x="535" y="545" width="3" height="16" fill="#0000c0"/><rect x="541" y="545" width="1" height="100" fill="#0000c0"/><rect x="540" y="561" width="3" height="73" fill="#0000c0"/><rect x="546" y="582" width="1" height="57" fill="#d01010"/><rect x="545" y="592" width="3" height="42" fill="#d01010"/><rect x="551" y="509" width="1" height="89" fill="#d01010"/><rect x="550" y="545" width="3" height="53" fill="#d01010"/><rect x="555" y="498" width="1" height="47" fill="#d01010"/><rect x="554" y="504" width="3" height="36" fill="#d01010"/><rect x="560" y="498" width="1" height="47" fill="#0000c0"/><rect x="559" y="498" width="3" height="37" fill="#0000c0"/><rect x="565" y="514" width="1" height="42" fill="#0000c0"/><rect x="564" y="530" width="3" height="5" fill="#0000c0"/><rect x="570" y="519" width="1" height="37" fill="#d01010"/><rect x="569" y="530" width="3" height="10" fill="#d01010"/><rect x="574" y="498" width="1" height="32" fill="#d01010"/><rect x="573" y="504" width="3" height="15" fill="#d01010"/><rect x="579" y="493" width="1" height="32" fill="#d01010"/><rect x="578" y="504" width="3" height="1" fill="#d01010"/><rect x="584" y="493" width="1" height="37" fill="#0000c0"/><rect x="583" y="498" width="3" height="11" fill="#0000c0"/><rect x="589" y="504" width="1" height="52" fill="#0000c0"/><rect x="588" y="509" width="3" height="47" fill="#0000c0"/><rect x="593" y="551" width="1" height="47" fill="#0000c0"/><rect x="592" y="556" width="3" height="42" fill="#0000c0"/><rect x="598" y="572" width="1" height="41" fill="#d01010"/><rect x="597" y="592" width="3" height="6" fill="#d01010"/><rect x="603" y="514" width="1" height="73" fill="#d01010"/><rect x="602" y="514" width="3" height="73" fill="#d01010"/><rect x="608" y="488" width="1" height="37" fill="#d01010"/><rect x="607" y="488" width="3" height="21" fill="#d01010"/><rect x="612" y="472" width="1" height="26" fill="#0000c0"/><rect x="611" y="488" width="3" height="5" fill="#0000c0"/><rect x="617" y="488" width="1" height="26" fill="#0000c0"/><rect x="616" y="493" width="3" height="21" fill="#0000c0"/><rect x="622" y="457" width="1" height="68" fill="#d01010"/><rect x="621" y="472" width="3" height="47" fill="#d01010"/><rect x="627" y="446" width="1" height="37" fill="#0000c0"/><rect x="626" y="472" width="3" height="11" fill="#0000c0"/><rect x="631" y="462" width="1" height="21" fill="#d01010"/><rect x="630" y="467" width="3" height="11" fill="#d01010"/><rect x="636" y="404" width="1" height="63" fill="#d01010"/><rect x="635" y="415" width="3" height="42" fill="#d01010"/><rect x="641" y="389" width="1" height="41" fill="#0000c0"/><rect x="640" y="410" width="3" height="5" fill="#0000c0"/><rect x="646" y="410" width="1" height="31" fill="#0000c0"/><rect x="645" y="410" width="3" height="31" fill="#0000c0"/><rect x="650" y="415" width="1" height="21" fill="#d01010"/><rect x="649" y="430" width="3" height="6" fill="#d01010"/><rect x="655" y="410" width="1" height="26" fill="#d01010"/><rect x="654" y="410" width="3" height="20" fill="#d01010"/><rect x="660" y="357" width="1" height="53" fill="#d01010"/><rect x="659" y="389" width="3" height="21" fill="#d01010"/><rect x="665" y="363" width="1" height="26" fill="#d01010"/><rect x="664" y="368" width="3" height="21" fill="#d01010"/><rect x="669" y="357" width="1" height="32" fill="#0000c0"/><rect x="668" y="363" width="3" height="26" fill="#0000c0"/><rect x="674" y="368" width="1" height="52" fill="#0000c0"/><rect x="673" y="389" width="3" height="31" fill="#0000c0"/><rect x="679" y="368" width="1" height="62" fill="#d01010"/><rect x="678" y="373" width="3" height="52" fill="#d01010"/><rect x="684" y="357" width="1" height="21" fill="#d01010"/><rect x="683" y="373" width="3" height="1" fill="#d01010"/><rect x="688" y="378" width="1" height="32" fill="#0000c0"/><rect x="687" y="378" width="3" height="11" fill="#0000c0"/><rect x="693" y="363" width="1" height="31" fill="#d01010"/><rect x="692" y="389" width="3" height="1" fill="#d01010"/><rect x="698" y="368" width="1" height="26" fill="#d01010"/><rect x="697" y="383" width="3" height="1" fill="#d01010"/><rect x="703" y="373" width="1" height="21" fill="#0000c0"/><rect x="702" y="389" width="3" height="5" fill="#0000c0"/><rect x="707" y="383" width="1" height="6" fill="#d01010"/><rect x="706" y="389" width="3" height="1" fill="#d01010"/><rect x="712" y="378" width="1" height="32" fill="#d01010"/><rect x="711" y="389" width="3" height="1" fill="#d01010"/><rect x="717" y="389" width="1" height="26" fill="#0000c0"/><rect x="716" y="389" width="3" height="26" fill="#0000c0"/><rect x="722" y="410" width="1" height="20" fill="#d01010"/><rect x="721" y="415" width="3" height="1" fill="#d01010"/><rect x="726" y="342" width="1" height="68" fill="#d01010"/><rect x="725" y="357" width="3" height="53" fill="#d01010"/><rect x="731" y="357" width="1" height="42" fill="#0000c0"/><rect x="730" y="357" width="3" height="32" fill="#0000c0"/><rect x="736" y="373" width="1" height="37" fill="#0000c0"/><rect x="735" y="383" width="3" height="16" fill="#0000c0"/><rect x="741" y="373" width="1" height="42" fill="#d01010"/><rect x="740" y="383" width="3" height="16" fill="#d01010"/><rect x="745" y="383" width="1" height="47" fill="#0000c0"/><rect x="744" y="383" width="3" height="42" fill="#0000c0"/><rect x="750" y="420" width="1" height="26" fill="#d01010"/><rect x="749" y="425" width="3" height="5" fill="#d01010"/><rect x="755" y="425" width="1" height="21" fill="#0000c0"/><rect x="754" y="425" width="3" height="16" fill="#0000c0"/><rect x="760" y="425" width="1" height="37" fill="#d01010"/><rect x="759" y="436" width="3" height="10" fill="#d01010"/><rect x="764" y="420" width="1" height="21" fill="#0000c0"/><rect x="763" y="425" width="3" height="11" fill="#0000c0"/><rect x="769" y="430" width="1" height="11" fill="#d01010"/><rect x="768" y="436" width="3" height="5" fill="#d01010"/><rect x="774" y="441" width="1" height="21" fill="#0000c0"/><rect x="773" y="441" width="3" height="16" fill="#0000c0"/><rect x="779" y="436" width="1" height="26" fill="#d01010"/><rect x="778" y="441" width="3" height="21" fill="#d01010"/><rect x="783" y="430" width="1" height="21" fill="#0000c0"/><rect x="782" y="446" width="3" height="5" fill="#0000c0"/><rect x="788" y="451" width="1" height="53" fill="#0000c0"/><rect x="787" y="451" width="3" height="47" fill="#0000c0"/><rect x="793" y="488" width="1" height="37" fill="#d01010"/><rect x="792" y="488" width="3" height="10" fill="#d01010"/><rect x="798" y="467" width="1" height="21" fill="#d01010"/><rect x="797" y="478" width="3" height="5" fill="#d01010"/><rect x="802" y="441" width="1" height="31" fill="#d01010"/><rect x="801" y="446" width="3" height="26" fill="#d01010"/><rect x="807" y="446" width="1" height="58" fill="#0000c0"/><rect x="806" y="446" width="3" height="37" fill="#0000c0"/><rect x="812" y="441" width="1" height="37" fill="#d01010"/><rect x="811" y="441" width="3" height="37" fill="#d01010"/><rect x="817" y="410" width="1" height="36" fill="#d01010"/><rect x="816" y="410" width="3" height="31" fill="#d01010"/><rect x="821" y="342" width="1" height="73" fill="#d01010"/><rect x="820" y="363" width="3" height="47" fill="#d01010"/><rect x="826" y="347" width="1" height="21" fill="#d01010"/><rect x="825" y="357" width="3" height="11" fill="#d01010"/><rect x="831" y="352" width="1" height="16" fill="#0000c0"/><rect x="830" y="357" width="3" height="6" fill="#0000c0"/><rect x="836" y="363" width="1" height="31" fill="#0000c0"/><rect x="835" y="368" width="3" height="1" fill="#0000c0"/><rect x="840" y="363" width="1" height="15" fill="#0000c0"/><rect x="839" y="368" width="3" height="5" fill="#0000c0"/></g><polyline points="2.0,542.0 25.0,553.0 50.0,566.0 80.0,582.5 96.0,590.0 110.0,597.0 120.0,601.7 138.3,609.4 160.3,617.2 173.3,625.0 187.5,635.3 204.4,647.0 218.6,654.0 235.0,660.6 254.0,665.4 279.8,676.5 285.2,678.2 290.0,679.2 294.8,680.0 299.5,681.2 304.2,682.6 309.0,683.9 313.8,684.8 318.5,685.9 323.2,687.5 328.0,688.8 332.8,689.7 337.5,690.4 342.2,690.3 347.0,690.7 351.8,690.8 356.5,690.9 361.2,691.4 366.0,691.6 370.8,692.4 375.5,693.0 380.2,693.4 385.0,694.0 389.8,695.1 394.5,696.1 399.2,697.7 404.0,699.1 408.8,700.7 413.5,702.1 418.2,703.2 423.0,703.8 427.8,704.9 432.5,706.1 437.2,706.9 442.0,707.2 446.8,707.0 451.5,707.2 456.2,707.5 461.0,706.8 465.8,705.1 470.5,702.7 475.2,700.8 480.0,699.6 484.8,698.7 489.5,698.3 494.2,698.7 499.0,698.9 503.8,699.4 508.5,700.1 513.2,701.1 522.0,699.5 526.8,698.0 531.5,695.9 536.2,694.0 541.0,693.3 545.8,691.6 550.5,689.1 555.2,685.7 560.0,682.8 564.8,679.8 569.5,676.1 574.2,672.5 579.0,669.4 583.8,666.1 588.5,663.3 593.2,661.3 598.0,659.3 602.8,655.9 607.5,652.1 612.2,647.7 617.0,644.0 621.8,640.1 626.5,636.4 631.2,633.0 636.0,628.8 640.8,624.4 645.5,620.6 650.2,616.5 655.0,612.4 659.8,607.8 664.5,602.6 669.2,597.7 674.0,593.0 678.8,587.3 683.5,581.6 688.2,576.2 693.0,570.7 697.8,565.1 702.5,559.8 707.2,554.7 712.0,549.7 716.8,544.8 721.5,539.9 726.2,534.1 731.0,528.9 735.8,524.1 740.5,518.8 745.2,513.7 750.0,508.9 754.8,504.9 759.5,501.1 764.2,496.9 769.0,492.7 773.8,489.0 778.5,484.7 783.2,480.1 788.0,476.0 792.8,471.9 797.5,467.6 802.2,462.5 807.0,461.3 811.8,459.4 816.5,457.2 821.2,453.9 826.0,449.3 830.8,445.5 835.5,442.5 840.2,440.3" fill="none" stroke="#1c7c1c" stroke-width="1" shape-rendering="crispEdges"/><polyline points="2.0,583.0 7.8,590.0 19.4,600.4 33.7,609.4 45.3,623.7 54.4,630.0 62.0,636.6 67.4,640.0 77.7,645.7 88.0,649.0 93.3,650.5 95.2,651.2 100.0,653.0 104.8,652.5 109.5,652.3 114.2,652.0 119.0,652.0 123.8,649.9 128.5,648.6 133.2,647.0 138.0,646.8 142.8,646.0 147.5,644.7 152.2,643.9 157.0,646.0 161.8,647.3 166.5,648.9 171.2,652.0 176.0,657.2 180.8,665.8 185.5,674.2 190.2,681.2 195.0,685.4 199.8,689.9 204.5,693.8 209.2,697.7 214.0,702.4 218.8,706.6 223.5,710.0 228.2,713.1 233.0,712.9 237.8,713.4 242.5,714.9 247.2,715.7 252.0,715.2 256.8,714.9 261.5,715.2 266.2,714.9 271.0,712.9 275.8,709.2 280.5,706.3 285.2,702.1 290.0,699.0 294.8,697.7 299.5,697.4 304.2,698.2 309.0,697.4 313.8,698.0 318.5,699.0 323.2,702.4 328.0,706.8 332.8,709.7 337.5,711.5 342.2,711.3 347.0,710.8 351.8,710.2 356.5,708.7 361.2,707.4 366.0,704.8 370.8,702.1 375.5,698.5 380.2,696.9 385.0,697.4 389.8,697.7 394.5,697.2 399.2,697.2 404.0,697.4 408.8,697.4 413.5,697.2 418.2,694.0 423.0,691.7 427.8,691.7 432.5,692.0 437.2,693.8 442.0,695.6 446.8,695.9 451.5,697.7 456.2,700.1 461.0,702.9 465.8,704.0 470.5,703.2 475.2,703.2 480.0,702.4 484.8,700.8 489.5,700.3 494.2,700.6 499.0,701.9 503.8,702.7 508.5,704.0 513.2,706.8 522.0,700.1 526.8,692.5 531.5,684.1 536.2,676.8 541.0,673.4 545.8,668.7 550.5,660.9 555.2,649.6 560.0,640.8 564.8,633.2 569.5,626.7 574.2,617.5 579.0,608.4 583.8,599.8 588.5,592.4 593.2,586.2 598.0,578.6 602.8,567.6 607.5,555.1 612.2,542.3 617.0,540.2 621.8,536.0 626.5,533.1 631.2,528.4 636.0,517.5 640.8,508.6 645.5,503.4 650.2,499.7 655.0,493.4 659.8,486.1 664.5,478.0 669.2,472.3 674.0,468.1 678.8,461.3 683.5,452.2 688.2,441.7 693.0,431.5 697.8,425.0 702.5,420.3 707.2,415.1 712.0,408.8 716.8,405.9 721.5,402.5 726.2,397.1 731.0,395.8 735.8,395.0 740.5,392.1 745.2,391.8 750.0,392.6 754.8,395.2 759.5,398.6 764.2,401.0 769.0,401.8 773.8,405.9 778.5,409.3 783.2,412.5 788.0,418.0 792.8,423.2 797.5,427.4 802.2,430.2 807.0,434.9 811.8,436.2 816.5,436.0 821.2,436.2 826.0,434.7 830.8,432.8 835.5,432.1 840.2,429.5" fill="none" stroke="#10109c" stroke-width="1" shape-rendering="crispEdges"/><polyline points="2.0,615.0 5.0,619.0 9.8,627.0 14.5,636.0 19.2,641.0 24.0,641.5 28.8,647.8 33.5,647.8 38.2,647.8 43.0,654.1 47.8,658.3 52.5,657.2 57.2,661.4 62.0,659.3 66.8,661.4 71.5,662.4 76.2,660.4 81.0,654.1 85.8,648.9 90.5,642.6 95.2,642.6 100.0,646.8 104.8,646.8 109.5,653.0 114.2,649.9 119.0,644.7 123.8,635.3 128.5,632.1 133.2,626.9 138.0,633.2 142.8,634.2 147.5,636.3 152.2,642.6 157.0,655.1 161.8,663.5 166.5,673.9 171.2,689.6 176.0,707.4 180.8,728.3 185.5,750.2 190.2,772.1 195.0,780.5 199.8,777.4 204.5,764.8 209.2,743.9 214.0,729.3 218.8,719.9 223.5,712.6 228.2,704.2 233.0,693.8 237.8,678.1 242.5,669.8 247.2,665.6 252.0,663.5 256.8,671.8 261.5,681.2 266.2,689.6 271.0,695.9 275.8,704.2 280.5,715.7 285.2,719.9 290.0,716.8 294.8,716.8 299.5,717.8 304.2,711.5 309.0,710.5 313.8,715.7 318.5,717.8 323.2,724.1 328.0,728.3 332.8,727.2 337.5,724.1 342.2,714.7 347.0,696.9 351.8,685.4 356.5,677.1 361.2,672.9 366.0,669.8 370.8,669.8 375.5,668.7 380.2,672.9 385.0,677.1 389.8,688.6 394.5,698.0 399.2,706.3 404.0,712.6 408.8,715.7 413.5,715.7 418.2,711.5 423.0,706.3 427.8,704.2 432.5,702.1 437.2,701.1 442.0,703.2 446.8,702.1 451.5,701.1 456.2,705.3 461.0,706.3 465.8,703.2 470.5,698.0 475.2,694.8 480.0,686.5 484.8,680.2 489.5,683.3 494.2,695.9 499.0,707.4 503.8,716.8 508.5,728.3 513.2,737.7 522.0,704.2 526.8,666.6 531.5,628.0 536.2,592.4 541.0,569.5 545.8,576.8 550.5,574.7 555.2,567.4 560.0,562.1 564.8,542.3 569.5,529.8 574.2,521.4 579.0,521.4 583.8,516.2 588.5,520.3 593.2,533.9 598.0,551.7 602.8,553.8 607.5,549.6 612.2,537.1 617.0,520.3 621.8,496.3 626.5,490.0 631.2,485.9 636.0,470.2 640.8,450.3 645.5,444.1 650.2,433.6 655.0,422.1 659.8,416.9 664.5,407.5 669.2,397.1 674.0,395.0 678.8,387.7 683.5,384.5 688.2,388.7 693.0,388.7 697.8,381.4 702.5,385.6 707.2,388.7 712.0,388.7 716.8,393.9 721.5,400.2 726.2,392.9 731.0,392.9 735.8,395.0 740.5,388.7 745.2,390.8 750.0,404.4 754.8,414.8 759.5,422.1 764.2,432.6 769.0,434.7 773.8,440.9 778.5,440.9 783.2,444.1 788.0,456.6 792.8,467.1 797.5,471.2 802.2,472.3 807.0,478.6 811.8,467.1 816.5,451.4 821.2,428.4 826.0,410.6 830.8,386.6 835.5,372.0 840.2,364.7" fill="none" stroke="#c41c1c" stroke-width="1" shape-rendering="crispEdges"/><line x1="521" y1="556" x2="843" y2="493" stroke="#a01818" stroke-width="1" stroke-dasharray="5 4" shape-rendering="crispEdges"/><path d="M185.5 806V825.5M185.5 825.5H200M185.5 825.5L190 828" stroke="#000080" fill="none" stroke-width="1"/><path d="M713 338.5H727M727 338.5L722 336M726.5 338.5V343" stroke="#b00000" fill="none" stroke-width="1"/><path d="M522.5 667L517 672.5H521V676H524V672.5H528Z" fill="#e00000"/><rect x="519" y="674" width="7" height="6" fill="#30d0d0" stroke="#000" stroke-width="1"/><path d="M519 679L522.5 692L525 679Z" fill="#000"/><path d="M522.5 690V704M520 698L522.5 702L525 697" stroke="#000" fill="none"/><rect x="825.5" y="44.5" width="8" height="8" fill="#fff" stroke="#787878" shape-rendering="crispEdges"/><rect x="835.5" y="44.5" width="8" height="8" fill="#fff" stroke="#787878" shape-rendering="crispEdges"/><path d="M827.5 48.5H832M837.5 46.5L842 51M842 46.5L837.5 51" stroke="#000" fill="none" stroke-width=".9"/><rect x="835.5" y="308.5" width="8" height="8" fill="#fff" stroke="#808080" shape-rendering="crispEdges"/><rect x="837.5" y="310.5" width="4" height="4" fill="none" stroke="#000" shape-rendering="crispEdges"/><rect x="846.5" y="843.5" width="14" height="10" fill="#f0f0f0" stroke="#808080" shape-rendering="crispEdges"/><circle cx="853.5" cy="849" r="2.5" fill="none" stroke="#000" stroke-width="1.5"/></svg>
<div class="t" style="left:3px;top:44px;color:#b41414;"><span class="s3">미니연결선물지수</span><span class="s2"> </span><span class="s6">9999yyyy</span><span class="s7">(</span><span class="s8">11</span><span class="s0">,</span><span class="s1">2</span><span class="s7">)</span><span class="s9">_</span><span class="s3">수익</span><span class="s2"> </span><span class="s1">2019</span><span class="s10">/</span><span class="s1">07</span><span class="s10">/</span><span class="s1">03</span><span class="s2"> </span><span class="s1">14</span><span class="s0">:</span><span class="s1">27</span><span class="s2"> </span><span class="s1">0</span><span class="s0">,</span><span class="s1">00</span></div>
<div class="t" style="left:3px;top:309px;color:#000;"><span class="s3">미니연결선물</span></div>
<div class="t" style="left:856px;top:131px;color:#000;"><span class="s4">-</span><span class="s1">47</span><span class="s0">,</span><span class="s1">50</span></div>
<div class="t" style="left:856px;top:794px;color:#000;"><span class="s1">272</span><span class="s0">,</span><span class="s1">00</span></div>
<div class="t" style="left:856px;top:664px;color:#000;"><span class="s1">272</span><span class="s0">,</span><span class="s1">50</span></div>
<div class="t" style="left:856px;top:533px;color:#000;"><span class="s1">273</span><span class="s0">,</span><span class="s1">00</span></div>
<div class="t" style="left:856px;top:403px;color:#000;"><span class="s1">273</span><span class="s0">,</span><span class="s1">50</span></div>
<div class="t" style="left:733px;top:320px;color:#b00000;"><span class="s11">H</span><span class="s0">:</span><span class="s2"> </span><span class="s4">-</span><span class="s1">0</span><span class="s0">,</span><span class="s1">04</span><span class="s12">%</span></div>
<div class="t" style="left:797px;top:320px;color:#000080;"><span class="s13">L</span><span class="s0">:</span><span class="s2"> </span><span class="s1">0</span><span class="s0">,</span><span class="s1">63</span><span class="s12">%</span></div>
<div class="t" style="left:590px;top:331px;color:#b00000;"><span class="s1">273</span><span class="s0">,</span><span class="s1">76</span><span class="s2"> </span><span class="s7">(</span><span class="s1">07</span><span class="s10">/</span><span class="s1">04</span><span class="s2"> </span><span class="s1">09</span><span class="s0">:</span><span class="s1">44</span><span class="s7">)</span></div>
<div class="t" style="left:205px;top:817px;color:#000080;"><span class="s1">271</span><span class="s0">,</span><span class="s1">92</span><span class="s2"> </span><span class="s7">(</span><span class="s1">07</span><span class="s10">/</span><span class="s1">03</span><span class="s2"> </span><span class="s1">14</span><span class="s0">:</span><span class="s1">26</span><span class="s7">)</span></div>
<div class="t" style="left:498px;top:680px;color:#000;"><span class="s9">_</span><span class="s14">BuyNo1</span></div>
<div class="t" style="left:47px;top:844px;color:#000;"><span class="s1">14</span><span class="s0">:</span><span class="s1">00</span></div>
<div class="t" style="left:189px;top:844px;color:#000;"><span class="s1">14</span><span class="s0">:</span><span class="s1">30</span></div>
<div class="t" style="left:332px;top:844px;color:#000;"><span class="s1">15</span><span class="s0">:</span><span class="s1">00</span></div>
<div class="t" style="left:474px;top:844px;color:#000;"><span class="s1">15</span><span class="s0">:</span><span class="s1">30</span></div>
<div class="t" style="left:650px;top:844px;color:#000;"><span class="s1">09</span><span class="s0">:</span><span class="s1">31</span></div>
<div class="t" style="left:792px;top:844px;color:#000;"><span class="s1">10</span><span class="s0">:</span><span class="s1">01</span></div>
<div class="t" style="left:508px;top:844px;color:#000;font-weight:bold;"><span class="s1">07</span><span class="s10">/</span><span class="s1">04</span></div>
<div class="t" style="left:868px;top:844px;color:#000;"><span class="s1">10</span><span class="s0">:</span><span class="s1">00</span></div>
<div style="left:72px;top:69px;width:444px;height:450px;background:linear-gradient(#93aed0 0,#a8c2e0 12px,#b9d1ea 24px,#b9d1ea 100%);border:1px solid #1a2230;border-radius:7px 7px 1px 1px;box-sizing:border-box;box-shadow:inset 0 0 0 1px rgba(255,255,255,.75)"></div>
<div style="left:75px;top:94px;width:438px;height:422px;background:#f0f0f0"></div>
<div class="t" style="left:79px;top:77px;color:#1a1a1a;"><span class="s3">시스템</span><span class="s2"> </span><span class="s3">트레이딩</span><span class="s2"> </span><span class="s3">설정</span><span class="s2"> </span><span class="s4">-</span><span class="s2"> </span><span class="s6">9999yyyy</span></div>
<div style="left:480px;top:74px;width:31px;height:17px;background:linear-gradient(#ecb0a0 0,#dd8a78 48%,#c4452c 52%,#d2705c 100%);border:1px solid #40181a;border-radius:3px;box-sizing:border-box;box-shadow:inset 0 0 0 1px rgba(255,255,255,.35)"><svg style="left:9px;top:3px" width="12" height="10"><path d="M1.5 1L10.5 8.5M10.5 1L1.5 8.5" stroke="#5a2a28" stroke-width="3.6"/><path d="M1.5 1L10.5 8.5M10.5 1L1.5 8.5" stroke="#fff" stroke-width="2.2"/></svg></div>
<div style="left:75px;top:94px;width:438px;height:58px;background:#fff"></div>
<div style="left:75px;top:151px;width:438px;height:2px;background:#6a6a6a"></div>
<div style="left:75px;top:153px;width:438px;height:1px;background:#fff"></div>
<div class="t" style="left:139px;top:98px;color:#000;font-weight:bold;"><span class="s15">시스템</span><span class="s16"> </span><span class="s15">변수</span><span class="s16"> </span><span class="s15">설정</span></div>
<div class="t" style="left:139px;top:110px;color:#000;"><span class="s3">시스템식의</span><span class="s17"> </span><span class="s3">변수를</span><span class="s17"> </span><span class="s3">설정</span><span class="s17"> </span><span class="s3">합니다</span><span class="s0">.</span></div>
<svg style="left:80px;top:98px" width="48" height="50" viewBox="0 0 48 50"><defs><linearGradient id="mg" x1="0" y1="0" x2="1" y2="1"><stop offset="0" stop-color="#9aa0f0"/><stop offset="1" stop-color="#4c50c8"/></linearGradient><linearGradient id="gg" x1="0" y1="0" x2="1" y2="1"><stop offset="0" stop-color="#b0e8b0"/><stop offset="1" stop-color="#38a048"/></linearGradient></defs><path d="M6 8L28 4L30 26L8 31Z" fill="url(#mg)" stroke="#3034a0" stroke-width="1"/><path d="M10 11L26 8L27 23L12 27Z" fill="url(#gg)"/><path d="M4 33L10 30L32 27L30 38L12 42L4 40Z" fill="url(#mg)" stroke="#3034a0" stroke-width=".8"/><path d="M24 10L43 6L43 28L26 33Z" fill="#f4f4fa" stroke="#a0a0b8" stroke-width="1"/><path d="M30 18V30M35 13V27M40 10V23" stroke="#2020c0" stroke-width="1"/><rect x="29" y="20" width="3" height="7" fill="#2020c0"/><rect x="33.5" y="15" width="3" height="9" fill="#e01010"/><rect x="38.5" y="12" width="3" height="8" fill="#e01010"/><path d="M18 41L22 44" stroke="#707070" stroke-width="2"/><path d="M13 49L30 43" stroke="#1c7c2c" stroke-width="4" stroke-linecap="round"/><path d="M14 48.5L29 43" stroke="#58c868" stroke-width="1.5" stroke-linecap="round"/></svg>
<div style="left:84px;top:181px;width:420px;height:295px;background:#f0f0f0;border:1px solid #fff;border-right:2px solid #696969;border-bottom:2px solid #696969;box-sizing:border-box"></div>
<div style="left:85px;top:163px;width:50px;height:20px;background:#f0f0f0;border:1px solid #fff;border-right:2px solid #696969;border-bottom:none;box-sizing:border-box"></div>
<div class="t" style="left:92px;top:165px;color:#000;"><span class="s3">변수</span></div>
<div style="left:135px;top:165px;width:62px;height:16px;border-top:1px solid #fff;border-right:2px solid #696969;box-sizing:border-box"></div>
<div class="t" style="left:140px;top:167px;color:#000;"><span class="s3">차트</span><span class="s2"> </span><span class="s3">표시</span></div>
<div style="left:197px;top:165px;width:60px;height:16px;border-top:1px solid #fff;border-right:2px solid #696969;box-sizing:border-box"></div>
<div class="t" style="left:202px;top:167px;color:#000;"><span class="s3">피라미딩</span></div>
<div style="left:257px;top:165px;width:66px;height:16px;border-top:1px solid #fff;border-right:2px solid #696969;box-sizing:border-box"></div>
<div class="t" style="left:262px;top:167px;color:#000;"><span class="s3">비용</span><span class="s10">/</span><span class="s3">수량</span></div>
<div style="left:323px;top:165px;width:61px;height:16px;border-top:1px solid #fff;border-right:2px solid #696969;box-sizing:border-box"></div>
<div class="t" style="left:328px;top:167px;color:#000;"><span class="s3">강제청산</span></div>
<div style="left:98px;top:193px;width:393px;height:243px;background:#fff;border:1px solid #828282;border-left:2px solid #828282;border-top:2px solid #828282;border-right-color:#fff;border-bottom-color:#fff;box-sizing:border-box"></div>
<div style="left:100px;top:195px;width:379px;height:14px;background:#f0f0f0;border-bottom:1px solid #696969;border-right:1px solid #696969;box-sizing:border-box"></div>
<div style="left:227px;top:195px;width:2px;height:13px;border-left:1px solid #696969;border-right:1px solid #fff;box-sizing:border-box"></div>
<div style="left:479px;top:195px;width:10px;height:14px;background:#f0f0f0;border-bottom:1px solid #696969;border-right:1px solid #696969;box-sizing:border-box"></div>
<div class="t" style="left:105px;top:195px;color:#000;"><span class="s3">변수이름</span></div>
<div class="t" style="left:235px;top:195px;color:#000;"><span class="s3">변수값</span></div>
<div style="left:100px;top:211px;width:379px;height:13px;background:#ececec"></div>
<div class="t" style="left:103px;top:212px;color:#000;"><span class="s3">연속봉수</span></div>
<div class="t" style="left:236px;top:212px;color:#000;"><span class="s8">11</span></div>
<div class="t" style="left:103px;top:225px;color:#000;"><span class="s3">연속봉들총합</span></div>
<div class="t" style="left:236px;top:225px;color:#000;"><span class="s1">2</span></div>
<div style="left:97px;top:445px;width:88px;height:22px;background:#f0f0f0;border:1px solid #fff;border-right-color:#505050;border-bottom-color:#505050;box-sizing:border-box"><div style="left:0;top:0;width:86px;height:20px;border:1px solid #f0f0f0;border-right-color:#a0a0a0;border-bottom-color:#a0a0a0;box-sizing:border-box"></div></div>
<div class="t" style="left:97px;top:450px;color:#000;width:88px;text-align:center;"><span class="s3">변수</span><span class="s2"> </span><span class="s3">편집</span></div>
<div style="left:84px;top:484px;width:88px;height:23px;background:#f0f0f0;border:1px solid #fff;border-right-color:#505050;border-bottom-color:#505050;box-sizing:border-box"><div style="left:0;top:0;width:86px;height:21px;border:1px solid #f0f0f0;border-right-color:#a0a0a0;border-bottom-color:#a0a0a0;box-sizing:border-box"></div></div>
<div class="t" style="left:84px;top:489px;color:#000;width:88px;text-align:center;"><span class="s3">편집</span></div>
<div style="left:320px;top:484px;width:88px;height:23px;background:#f0f0f0;border:1px solid #000;box-sizing:border-box"><div style="left:0;top:0;width:86px;height:21px;border:1px solid #fff;border-right-color:#707070;border-bottom-color:#707070;box-sizing:border-box"></div></div>
<div class="t" style="left:320px;top:489px;color:#000;width:88px;text-align:center;"><span class="s3">확인</span></div>
<div style="left:416px;top:484px;width:88px;height:23px;background:#f0f0f0;border:1px solid #fff;border-right-color:#505050;border-bottom-color:#505050;box-sizing:border-box"><div style="left:0;top:0;width:86px;height:21px;border:1px solid #f0f0f0;border-right-color:#a0a0a0;border-bottom-color:#a0a0a0;box-sizing:border-box"></div></div>
<div class="t" style="left:416px;top:489px;color:#000;width:88px;text-align:center;"><span class="s3">취소</span></div>
<div style="left:989px;top:8px;width:662px;height:637px;background:linear-gradient(#e9eff7 0,#dfe8f3 8px,#cfdcec 22px,#dbe6f2 26px);border-top:1px solid #34445a;border-left:1px solid #f4f8fc;box-sizing:border-box"></div>
<div style="left:989px;top:40px;width:8px;height:604px;background:#e6edf6"></div>
<div style="left:989px;top:616px;width:662px;height:29px;background:#e3ebf5"></div>
<div style="left:989px;top:644px;width:662px;height:1px;background:#5a6c86"></div>
<div class="t" style="left:997px;top:17px;color:#707070;"><span class="s3">시스템</span><span class="s17"> </span><span class="s3">성능</span><span class="s17"> </span><span class="s3">보고서</span></div>
<div style="left:1646px;top:18px;width:10px;height:10px;border:1px solid #707880;background:#f4f4f4;box-sizing:border-box"></div>
<div style="left:997px;top:33px;width:654px;height:583px;background:#a6c4e0;border-left:2px solid #8a929c;border-top:2px solid #8a9098;box-sizing:border-box"></div>
<svg style="left:1620px;top:42px" width="31" height="15"><path d="M1.5 1.5H13.5V13.5H1.5Z" fill="#e8eef4" stroke="#606468" stroke-width="1.2"/><path d="M3.5 1.5V5.5H11.5V1.5" fill="#fff" stroke="#606468"/><path d="M21 9V2.5H31M23 5H31M23 7H31M20.5 9.5H31M20.5 13.5H31M20.5 9.5V13.5" fill="none" stroke="#505458" stroke-width="1.2"/></svg>
<div class="t" style="left:1003px;top:36px;color:#000;"><span class="s3">종목명</span><span class="s4">(</span><span class="s3">시스템명</span><span class="s4">)</span></div>
<div class="t" style="left:1003px;top:51px;color:#000;"><span class="s3">주기</span><span class="s4">(</span><span class="s3">기간</span><span class="s4">)</span></div>
<div class="t" style="left:1129px;top:36px;color:#000;"><span class="s10">:</span><span class="s17"> </span><span class="s3">미니연결선물지수</span><span class="s4">(</span><span class="s18">9999yyyy</span><span class="s4">(</span><span class="s8">11</span><span class="s10">,</span><span class="s1">2</span><span class="s4">)</span><span class="s4">)</span></div>
<div class="t" style="left:1129px;top:51px;color:#000;"><span class="s10">:</span><span class="s17"> </span><span class="s1">1</span><span class="s3">분</span><span class="s17"> </span><span class="s4">(</span><span class="s1">2015</span><span class="s10">/</span><span class="s1">07</span><span class="s10">/</span><span class="s1">20</span><span class="s17"> </span><span class="s19">~</span><span class="s17"> </span><span class="s1">2019</span><span class="s10">/</span><span class="s1">07</span><span class="s10">/</span><span class="s1">08</span><span class="s4">)</span></div>
<div style="left:1001px;top:68px;width:650px;height:546px;background:#a6c4e0;border-left:2px solid #8c949e;border-top:2px solid #80888f;box-sizing:border-box"></div>
<div class="t" style="left:1008px;top:73px;color:#000;"><span class="s3">진입명</span></div>
<div style="left:1048px;top:71px;width:149px;height:18px;background:#fff;border:1px solid #e2e6ea;border-top-color:#8c949c;border-left-color:#8c949c;box-sizing:border-box"></div>
<div style="left:1176px;top:72px;width:20px;height:16px;background:#f2f2f2"></div>
<svg style="left:1183.5px;top:78px" width="9" height="5"><path d="M0 0H9L4.5 5Z" fill="#000"/></svg>
<div class="t" style="left:1053px;top:73px;color:#000;"><span class="s3">모든</span><span class="s17"> </span><span class="s3">진입신호명</span></div>
<div class="t" style="left:1209px;top:73px;color:#000;"><span class="s3">청산명</span></div>
<div style="left:1248px;top:71px;width:149px;height:18px;background:#fff;border:1px solid #e2e6ea;border-top-color:#8c949c;border-left-color:#8c949c;box-sizing:border-box"></div>
<div style="left:1376px;top:72px;width:20px;height:16px;background:#f2f2f2"></div>
<svg style="left:1383.5px;top:78px" width="9" height="5"><path d="M0 0H9L4.5 5Z" fill="#000"/></svg>
<div class="t" style="left:1253px;top:73px;color:#000;"><span class="s3">모든</span><span class="s17"> </span><span class="s3">청산신호명</span></div>
<div style="left:1003px;top:90px;width:648px;height:520px;background:#fff"></div>
<div style="left:1003px;top:89px;width:648px;height:2px;background:#6c7278"></div>
<div style="left:1004px;top:91px;width:129px;height:19px;background:#f0f0f0;border:1px solid #fff;border-right-color:#9a9a9a;border-bottom-color:#9a9a9a;box-sizing:border-box"></div>
<div class="t" style="left:1004px;top:94px;color:#000;width:129px;text-align:center;"><span class="s3">진입일시</span></div>
<div style="left:1133px;top:91px;width:56px;height:19px;background:#f0f0f0;border:1px solid #fff;border-right-color:#9a9a9a;border-bottom-color:#9a9a9a;box-sizing:border-box"></div>
<div class="t" style="left:1133px;top:94px;color:#000;width:56px;text-align:center;"><span class="s3">진입종류</span></div>
<div style="left:1189px;top:91px;width:124px;height:19px;background:#f0f0f0;border:1px solid #fff;border-right-color:#9a9a9a;border-bottom-color:#9a9a9a;box-sizing:border-box"></div>
<div class="t" style="left:1189px;top:94px;color:#000;width:124px;text-align:center;"><span class="s3">진입명</span></div>
<div style="left:1313px;top:91px;width:80px;height:19px;background:#f0f0f0;border:1px solid #fff;border-right-color:#9a9a9a;border-bottom-color:#9a9a9a;box-sizing:border-box"></div>
<div class="t" style="left:1313px;top:94px;color:#000;width:80px;text-align:center;"><span class="s3">진입가격</span><span class="s4">(</span><span class="s13">Pt</span><span class="s4">)</span></div>
<div style="left:1393px;top:91px;width:80px;height:19px;background:#f0f0f0;border:1px solid #fff;border-right-color:#9a9a9a;border-bottom-color:#9a9a9a;box-sizing:border-box"></div>
<div class="t" style="left:1393px;top:94px;color:#000;width:80px;text-align:center;"><span class="s3">수량</span></div>
<div style="left:1473px;top:91px;width:80px;height:19px;background:#f0f0f0;border:1px solid #fff;border-right-color:#9a9a9a;border-bottom-color:#9a9a9a;box-sizing:border-box"></div>
<div class="t" style="left:1473px;top:94px;color:#000;width:80px;text-align:center;"><span class="s3">수익률</span><span class="s4">(</span><span class="s20">%</span><span class="s4">)</span></div>
<div style="left:1553px;top:91px;width:80px;height:19px;background:#f0f0f0;border:1px solid #fff;border-right-color:#9a9a9a;border-bottom-color:#9a9a9a;box-sizing:border-box"></div>
<div class="t" style="left:1553px;top:94px;color:#000;width:80px;text-align:center;"><span class="s3">최대수익</span><span class="s4">(</span><span class="s13">Pt</span><span class="s4">)</span></div>
<div style="left:1633px;top:91px;width:9px;height:19px;background:#f0f0f0;border:1px solid #fff;border-bottom-color:#9a9a9a;box-sizing:border-box;overflow:hidden"></div>
<div style="left:1004px;top:110px;width:129px;height:19px;background:#f0f0f0;border:1px solid #fff;border-right-color:#9a9a9a;border-bottom-color:#9a9a9a;box-sizing:border-box"></div>
<div class="t" style="left:1004px;top:113px;color:#000;width:129px;text-align:center;"><span class="s3">청산일시</span></div>
<div style="left:1133px;top:110px;width:56px;height:19px;background:#f0f0f0;border:1px solid #fff;border-right-color:#9a9a9a;border-bottom-color:#9a9a9a;box-sizing:border-box"></div>
<div class="t" style="left:1133px;top:113px;color:#000;width:56px;text-align:center;"><span class="s3">청산종류</span></div>
<div style="left:1189px;top:110px;width:124px;height:19px;background:#f0f0f0;border:1px solid #fff;border-right-color:#9a9a9a;border-bottom-color:#9a9a9a;box-sizing:border-box"></div>
<div class="t" style="left:1189px;top:113px;color:#000;width:124px;text-align:center;"><span class="s3">청산명</span></div>
<div style="left:1313px;top:110px;width:80px;height:19px;background:#f0f0f0;border:1px solid #fff;border-right-color:#9a9a9a;border-bottom-color:#9a9a9a;box-sizing:border-box"></div>
<div class="t" style="left:1313px;top:113px;color:#000;width:80px;text-align:center;"><span class="s3">청산가격</span><span class="s4">(</span><span class="s13">Pt</span><span class="s4">)</span></div>
<div style="left:1393px;top:110px;width:80px;height:19px;background:#f0f0f0;border:1px solid #fff;border-right-color:#9a9a9a;border-bottom-color:#9a9a9a;box-sizing:border-box"></div>
<div class="t" style="left:1393px;top:113px;color:#000;width:80px;text-align:center;"><span class="s3">수익</span><span class="s4">(</span><span class="s13">Pt</span><span class="s4">)</span></div>
<div style="left:1473px;top:110px;width:80px;height:19px;background:#f0f0f0;border:1px solid #fff;border-right-color:#9a9a9a;border-bottom-color:#9a9a9a;box-sizing:border-box"></div>
<div class="t" style="left:1473px;top:113px;color:#000;width:80px;text-align:center;"><span class="s3">누적수익</span><span class="s4">(</span><span class="s13">Pt</span><span class="s4">)</span></div>
<div style="left:1553px;top:110px;width:80px;height:19px;background:#f0f0f0;border:1px solid #fff;border-right-color:#9a9a9a;border-bottom-color:#9a9a9a;box-sizing:border-box"></div>
<div class="t" style="left:1553px;top:113px;color:#000;width:80px;text-align:center;"><span class="s3">최대손실</span><span class="s4">(</span><span class="s13">Pt</span><span class="s4">)</span></div>
<div style="left:1633px;top:110px;width:9px;height:19px;background:#f0f0f0;border:1px solid #fff;border-bottom-color:#9a9a9a;box-sizing:border-box;overflow:hidden"></div>
<div style="left:1004px;top:129px;width:638px;height:19px;background:#fff"></div>
<div class="t" style="left:1020px;top:132px;color:#000;"><span class="s1">2019</span><span class="s10">/</span><span class="s1">06</span><span class="s10">/</span><span class="s8">11</span><span class="s17"> </span><span class="s1">09</span><span class="s10">:</span><span class="s1">05</span></div>
<div class="t" style="left:1139px;top:132px;color:#000;"><span class="s3">매수</span></div>
<div class="t" style="left:1196px;top:132px;color:#000;"><span class="s9">_</span><span class="s21">BuyNo1</span></div>
<div class="t" style="left:1313px;top:132px;color:#000;width:76px;text-align:right;"><span class="s1">271</span><span class="s10">.</span><span class="s1">78</span></div>
<div class="t" style="left:1393px;top:132px;color:#000;width:76px;text-align:right;"><span class="s1">1</span></div>
<div class="t" style="left:1473px;top:132px;color:#c00000;width:76px;text-align:right;"><span class="s1">0</span><span class="s10">.</span><span class="s1">49</span></div>
<div class="t" style="left:1553px;top:132px;color:#c00000;width:76px;text-align:right;"><span class="s1">1</span><span class="s10">.</span><span class="s1">58</span></div>
<div style="left:1004px;top:147px;width:638px;height:1px;background:#e0e0e0"></div>
<div style="left:1004px;top:148px;width:638px;height:19px;background:#f2f2f2"></div>
<div class="t" style="left:1020px;top:151px;color:#000;"><span class="s1">2019</span><span class="s10">/</span><span class="s1">06</span><span class="s10">/</span><span class="s8">11</span><span class="s17"> </span><span class="s1">14</span><span class="s10">:</span><span class="s1">46</span></div>
<div class="t" style="left:1139px;top:151px;color:#000;"><span class="s3">매수청산</span></div>
<div class="t" style="left:1196px;top:151px;color:#000;"><span class="s11">StopEndOfDay</span></div>
<div class="t" style="left:1313px;top:151px;color:#000;width:76px;text-align:right;"><span class="s1">273</span><span class="s10">.</span><span class="s1">20</span></div>
<div class="t" style="left:1393px;top:151px;color:#c00000;width:76px;text-align:right;"><span class="s1">1</span><span class="s10">.</span><span class="s1">32</span></div>
<div class="t" style="left:1473px;top:151px;color:#000080;width:76px;text-align:right;"><span class="s4">-</span><span class="s1">47</span><span class="s10">.</span><span class="s1">60</span></div>
<div class="t" style="left:1553px;top:151px;color:#000080;width:76px;text-align:right;"><span class="s4">-</span><span class="s1">0</span><span class="s10">.</span><span class="s1">58</span></div>
<div style="left:1004px;top:166px;width:638px;height:1px;background:#1c2a6c"></div>
<div style="left:1004px;top:167px;width:638px;height:19px;background:#fff"></div>
<div class="t" style="left:1020px;top:170px;color:#000;"><span class="s1">2019</span><span class="s10">/</span><span class="s1">06</span><span class="s10">/</span><span class="s1">13</span><span class="s17"> </span><span class="s1">09</span><span class="s10">:</span><span class="s1">01</span></div>
<div class="t" style="left:1139px;top:170px;color:#000;"><span class="s3">매수</span></div>
<div class="t" style="left:1196px;top:170px;color:#000;"><span class="s9">_</span><span class="s21">BuyNo1</span></div>
<div class="t" style="left:1313px;top:170px;color:#000;width:76px;text-align:right;"><span class="s1">272</span><span class="s10">.</span><span class="s1">24</span></div>
<div class="t" style="left:1393px;top:170px;color:#000;width:76px;text-align:right;"><span class="s1">1</span></div>
<div class="t" style="left:1473px;top:170px;color:#000080;width:76px;text-align:right;"><span class="s4">-</span><span class="s1">0</span><span class="s10">.</span><span class="s1">29</span></div>
<div class="t" style="left:1553px;top:170px;color:#c00000;width:76px;text-align:right;"><span class="s1">0</span><span class="s10">.</span><span class="s1">22</span></div>
<div style="left:1004px;top:185px;width:638px;height:1px;background:#e0e0e0"></div>
<div style="left:1004px;top:186px;width:638px;height:19px;background:#f2f2f2"></div>
<div class="t" style="left:1020px;top:189px;color:#000;"><span class="s1">2019</span><span class="s10">/</span><span class="s1">06</span><span class="s10">/</span><span class="s1">13</span><span class="s17"> </span><span class="s1">14</span><span class="s10">:</span><span class="s1">46</span></div>
<div class="t" style="left:1139px;top:189px;color:#000;"><span class="s3">매수청산</span></div>
<div class="t" style="left:1196px;top:189px;color:#000;"><span class="s11">StopEndOfDay</span></div>
<div class="t" style="left:1313px;top:189px;color:#000;width:76px;text-align:right;"><span class="s1">271</span><span class="s10">.</span><span class="s1">54</span></div>
<div class="t" style="left:1393px;top:189px;color:#000080;width:76px;text-align:right;"><span class="s4">-</span><span class="s1">0</span><span class="s10">.</span><span class="s1">80</span></div>
<div class="t" style="left:1473px;top:189px;color:#000080;width:76px;text-align:right;"><span class="s4">-</span><span class="s1">48</span><span class="s10">.</span><span class="s1">40</span></div>
<div class="t" style="left:1553px;top:189px;color:#000080;width:76px;text-align:right;"><span class="s4">-</span><span class="s1">4</span><span class="s10">.</span><span class="s1">06</span></div>
<div style="left:1004px;top:204px;width:638px;height:1px;background:#1c2a6c"></div>
<div style="left:1004px;top:205px;width:638px;height:19px;background:#fff"></div>
<div class="t" style="left:1020px;top:208px;color:#000;"><span class="s1">2019</span><span class="s10">/</span><span class="s1">06</span><span class="s10">/</span><span class="s1">18</span><span class="s17"> </span><span class="s1">09</span><span class="s10">:</span><span class="s1">01</span></div>
<div class="t" style="left:1139px;top:208px;color:#000;"><span class="s3">매수</span></div>
<div class="t" style="left:1196px;top:208px;color:#000;"><span class="s9">_</span><span class="s21">BuyNo1</span></div>
<div class="t" style="left:1313px;top:208px;color:#000;width:76px;text-align:right;"><span class="s1">269</span><span class="s10">.</span><span class="s1">26</span></div>
<div class="t" style="left:1393px;top:208px;color:#000;width:76px;text-align:right;"><span class="s1">1</span></div>
<div class="t" style="left:1473px;top:208px;color:#c00000;width:76px;text-align:right;"><span class="s1">0</span><span class="s10">.</span><span class="s1">48</span></div>
<div class="t" style="left:1553px;top:208px;color:#c00000;width:76px;text-align:right;"><span class="s1">2</span><span class="s10">.</span><span class="s1">12</span></div>
<div style="left:1004px;top:223px;width:638px;height:1px;background:#e0e0e0"></div>
<div style="left:1004px;top:224px;width:638px;height:19px;background:#f2f2f2"></div>
<div class="t" style="left:1020px;top:227px;color:#000;"><span class="s1">2019</span><span class="s10">/</span><span class="s1">06</span><span class="s10">/</span><span class="s1">18</span><span class="s17"> </span><span class="s1">14</span><span class="s10">:</span><span class="s1">46</span></div>
<div class="t" style="left:1139px;top:227px;color:#000;"><span class="s3">매수청산</span></div>
<div class="t" style="left:1196px;top:227px;color:#000;"><span class="s11">StopEndOfDay</span></div>
<div class="t" style="left:1313px;top:227px;color:#000;width:76px;text-align:right;"><span class="s1">270</span><span class="s10">.</span><span class="s1">64</span></div>
<div class="t" style="left:1393px;top:227px;color:#c00000;width:76px;text-align:right;"><span class="s1">1</span><span class="s10">.</span><span class="s1">28</span></div>
<div class="t" style="left:1473px;top:227px;color:#000080;width:76px;text-align:right;"><span class="s4">-</span><span class="s1">47</span><span class="s10">.</span><span class="s1">12</span></div>
<div class="t" style="left:1553px;top:227px;color:#000080;width:76px;text-align:right;"><span class="s4">-</span><span class="s1">0</span><span class="s10">.</span><span class="s1">08</span></div>
<div style="left:1004px;top:242px;width:638px;height:1px;background:#1c2a6c"></div>
<div style="left:1004px;top:243px;width:638px;height:19px;background:#fff"></div>
<div class="t" style="left:1020px;top:246px;color:#000;"><span class="s1">2019</span><span class="s10">/</span><span class="s1">06</span><span class="s10">/</span><span class="s1">21</span><span class="s17"> </span><span class="s1">09</span><span class="s10">:</span><span class="s1">06</span></div>
<div class="t" style="left:1139px;top:246px;color:#000;"><span class="s3">매수</span></div>
<div class="t" style="left:1196px;top:246px;color:#000;"><span class="s9">_</span><span class="s21">BuyNo1</span></div>
<div class="t" style="left:1313px;top:246px;color:#000;width:76px;text-align:right;"><span class="s1">275</span><span class="s10">.</span><span class="s1">02</span></div>
<div class="t" style="left:1393px;top:246px;color:#000;width:76px;text-align:right;"><span class="s1">1</span></div>
<div class="t" style="left:1473px;top:246px;color:#000080;width:76px;text-align:right;"><span class="s4">-</span><span class="s1">0</span><span class="s10">.</span><span class="s1">24</span></div>
<div class="t" style="left:1553px;top:246px;color:#c00000;width:76px;text-align:right;"><span class="s1">0</span><span class="s10">.</span><span class="s1">36</span></div>
<div style="left:1004px;top:261px;width:638px;height:1px;background:#e0e0e0"></div>
<div style="left:1004px;top:262px;width:638px;height:19px;background:#f2f2f2"></div>
<div class="t" style="left:1020px;top:265px;color:#000;"><span class="s1">2019</span><span class="s10">/</span><span class="s1">06</span><span class="s10">/</span><span class="s1">21</span><span class="s17"> </span><span class="s1">14</span><span class="s10">:</span><span class="s1">46</span></div>
<div class="t" style="left:1139px;top:265px;color:#000;"><span class="s3">매수청산</span></div>
<div class="t" style="left:1196px;top:265px;color:#000;"><span class="s11">StopEndOfDay</span></div>
<div class="t" style="left:1313px;top:265px;color:#000;width:76px;text-align:right;"><span class="s1">274</span><span class="s10">.</span><span class="s1">46</span></div>
<div class="t" style="left:1393px;top:265px;color:#000080;width:76px;text-align:right;"><span class="s4">-</span><span class="s1">0</span><span class="s10">.</span><span class="s1">66</span></div>
<div class="t" style="left:1473px;top:265px;color:#000080;width:76px;text-align:right;"><span class="s4">-</span><span class="s1">47</span><span class="s10">.</span><span class="s1">78</span></div>
<div class="t" style="left:1553px;top:265px;color:#000080;width:76px;text-align:right;"><span class="s4">-</span><span class="s1">0</span><span class="s10">.</span><span class="s1">98</span></div>
<div style="left:1004px;top:280px;width:638px;height:1px;background:#1c2a6c"></div>
<div style="left:1004px;top:281px;width:638px;height:19px;background:#fff"></div>
<div class="t" style="left:1020px;top:284px;color:#000;"><span class="s1">2019</span><span class="s10">/</span><span class="s1">06</span><span class="s10">/</span><span class="s1">24</span><span class="s17"> </span><span class="s1">09</span><span class="s10">:</span><span class="s1">06</span></div>
<div class="t" style="left:1139px;top:284px;color:#000;"><span class="s3">매수</span></div>
<div class="t" style="left:1196px;top:284px;color:#000;"><span class="s9">_</span><span class="s21">BuyNo1</span></div>
<div class="t" style="left:1313px;top:284px;color:#000;width:76px;text-align:right;"><span class="s1">275</span><span class="s10">.</span><span class="s1">18</span></div>
<div class="t" style="left:1393px;top:284px;color:#000;width:76px;text-align:right;"><span class="s1">1</span></div>
<div class="t" style="left:1473px;top:284px;color:#000080;width:76px;text-align:right;"><span class="s4">-</span><span class="s1">0</span><span class="s10">.</span><span class="s1">09</span></div>
<div class="t" style="left:1553px;top:284px;color:#c00000;width:76px;text-align:right;"><span class="s1">0</span><span class="s10">.</span><span class="s1">86</span></div>
<div style="left:1004px;top:299px;width:638px;height:1px;background:#e0e0e0"></div>
<div style="left:1004px;top:300px;width:638px;height:19px;background:#f2f2f2"></div>
<div class="t" style="left:1020px;top:303px;color:#000;"><span class="s1">2019</span><span class="s10">/</span><span class="s1">06</span><span class="s10">/</span><span class="s1">24</span><span class="s17"> </span><span class="s1">14</span><span class="s10">:</span><span class="s1">46</span></div>
<div class="t" style="left:1139px;top:303px;color:#000;"><span class="s3">매수청산</span></div>
<div class="t" style="left:1196px;top:303px;color:#000;"><span class="s11">StopEndOfDay</span></div>
<div class="t" style="left:1313px;top:303px;color:#000;width:76px;text-align:right;"><span class="s1">275</span><span class="s10">.</span><span class="s1">02</span></div>
<div class="t" style="left:1393px;top:303px;color:#000080;width:76px;text-align:right;"><span class="s4">-</span><span class="s1">0</span><span class="s10">.</span><span class="s1">26</span></div>
<div class="t" style="left:1473px;top:303px;color:#000080;width:76px;text-align:right;"><span class="s4">-</span><span class="s1">48</span><span class="s10">.</span><span class="s1">03</span></div>
<div class="t" style="left:1553px;top:303px;color:#000080;width:76px;text-align:right;"><span class="s4">-</span><span class="s1">0</span><span class="s10">.</span><span class="s1">62</span></div>
<div style="left:1004px;top:318px;width:638px;height:1px;background:#1c2a6c"></div>
<div style="left:1004px;top:319px;width:638px;height:19px;background:#fff"></div>
<div class="t" style="left:1020px;top:322px;color:#000;"><span class="s1">2019</span><span class="s10">/</span><span class="s1">06</span><span class="s10">/</span><span class="s1">25</span><span class="s17"> </span><span class="s1">09</span><span class="s10">:</span><span class="s1">05</span></div>
<div class="t" style="left:1139px;top:322px;color:#000;"><span class="s3">매수</span></div>
<div class="t" style="left:1196px;top:322px;color:#000;"><span class="s9">_</span><span class="s21">BuyNo1</span></div>
<div class="t" style="left:1313px;top:322px;color:#000;width:76px;text-align:right;"><span class="s1">275</span><span class="s10">.</span><span class="s1">38</span></div>
<div class="t" style="left:1393px;top:322px;color:#000;width:76px;text-align:right;"><span class="s1">1</span></div>
<div class="t" style="left:1473px;top:322px;color:#000080;width:76px;text-align:right;"><span class="s4">-</span><span class="s1">0</span><span class="s10">.</span><span class="s1">49</span></div>
<div class="t" style="left:1553px;top:322px;color:#c00000;width:76px;text-align:right;"><span class="s1">0</span><span class="s10">.</span><span class="s1">96</span></div>
<div style="left:1004px;top:337px;width:638px;height:1px;background:#e0e0e0"></div>
<div style="left:1004px;top:338px;width:638px;height:19px;background:#f2f2f2"></div>
<div class="t" style="left:1020px;top:341px;color:#000;"><span class="s1">2019</span><span class="s10">/</span><span class="s1">06</span><span class="s10">/</span><span class="s1">25</span><span class="s17"> </span><span class="s1">14</span><span class="s10">:</span><span class="s1">46</span></div>
<div class="t" style="left:1139px;top:341px;color:#000;"><span class="s3">매수청산</span></div>
<div class="t" style="left:1196px;top:341px;color:#000;"><span class="s11">StopEndOfDay</span></div>
<div class="t" style="left:1313px;top:341px;color:#000;width:76px;text-align:right;"><span class="s1">274</span><span class="s10">.</span><span class="s1">14</span></div>
<div class="t" style="left:1393px;top:341px;color:#000080;width:76px;text-align:right;"><span class="s4">-</span><span class="s1">1</span><span class="s10">.</span><span class="s1">34</span></div>
<div class="t" style="left:1473px;top:341px;color:#000080;width:76px;text-align:right;"><span class="s4">-</span><span class="s1">49</span><span class="s10">.</span><span class="s1">37</span></div>
<div class="t" style="left:1553px;top:341px;color:#000080;width:76px;text-align:right;"><span class="s4">-</span><span class="s1">1</span><span class="s10">.</span><span class="s1">88</span></div>
<div style="left:1004px;top:356px;width:638px;height:1px;background:#1c2a6c"></div>
<div style="left:1004px;top:357px;width:638px;height:19px;background:#fff"></div>
<div class="t" style="left:1020px;top:360px;color:#000;"><span class="s1">2019</span><span class="s10">/</span><span class="s1">06</span><span class="s10">/</span><span class="s1">26</span><span class="s17"> </span><span class="s1">09</span><span class="s10">:</span><span class="s1">01</span></div>
<div class="t" style="left:1139px;top:360px;color:#000;"><span class="s3">매수</span></div>
<div class="t" style="left:1196px;top:360px;color:#000;"><span class="s9">_</span><span class="s21">BuyNo1</span></div>
<div class="t" style="left:1313px;top:360px;color:#000;width:76px;text-align:right;"><span class="s1">274</span><span class="s10">.</span><span class="s1">54</span></div>
<div class="t" style="left:1393px;top:360px;color:#000;width:76px;text-align:right;"><span class="s1">1</span></div>
<div class="t" style="left:1473px;top:360px;color:#000080;width:76px;text-align:right;"><span class="s4">-</span><span class="s1">0</span><span class="s10">.</span><span class="s1">05</span></div>
<div class="t" style="left:1553px;top:360px;color:#c00000;width:76px;text-align:right;"><span class="s1">1</span><span class="s10">.</span><span class="s1">04</span></div>
<div style="left:1004px;top:375px;width:638px;height:1px;background:#e0e0e0"></div>
<div style="left:1004px;top:376px;width:638px;height:19px;background:#f2f2f2"></div>
<div class="t" style="left:1020px;top:379px;color:#000;"><span class="s1">2019</span><span class="s10">/</span><span class="s1">06</span><span class="s10">/</span><span class="s1">26</span><span class="s17"> </span><span class="s1">14</span><span class="s10">:</span><span class="s1">46</span></div>
<div class="t" style="left:1139px;top:379px;color:#000;"><span class="s3">매수청산</span></div>
<div class="t" style="left:1196px;top:379px;color:#000;"><span class="s11">StopEndOfDay</span></div>
<div class="t" style="left:1313px;top:379px;color:#000;width:76px;text-align:right;"><span class="s1">274</span><span class="s10">.</span><span class="s1">50</span></div>
<div class="t" style="left:1393px;top:379px;color:#000080;width:76px;text-align:right;"><span class="s4">-</span><span class="s1">0</span><span class="s10">.</span><span class="s1">14</span></div>
<div class="t" style="left:1473px;top:379px;color:#000080;width:76px;text-align:right;"><span class="s4">-</span><span class="s1">49</span><span class="s10">.</span><span class="s1">51</span></div>
<div class="t" style="left:1553px;top:379px;color:#000080;width:76px;text-align:right;"><span class="s4">-</span><span class="s1">0</span><span class="s10">.</span><span class="s1">52</span></div>
<div style="left:1004px;top:394px;width:638px;height:1px;background:#1c2a6c"></div>
<div style="left:1004px;top:395px;width:638px;height:19px;background:#fff"></div>
<div class="t" style="left:1020px;top:398px;color:#000;"><span class="s1">2019</span><span class="s10">/</span><span class="s1">06</span><span class="s10">/</span><span class="s1">27</span><span class="s17"> </span><span class="s1">09</span><span class="s10">:</span><span class="s1">06</span></div>
<div class="t" style="left:1139px;top:398px;color:#000;"><span class="s3">매수</span></div>
<div class="t" style="left:1196px;top:398px;color:#000;"><span class="s9">_</span><span class="s21">BuyNo1</span></div>
<div class="t" style="left:1313px;top:398px;color:#000;width:76px;text-align:right;"><span class="s1">275</span><span class="s10">.</span><span class="s1">50</span></div>
<div class="t" style="left:1393px;top:398px;color:#000;width:76px;text-align:right;"><span class="s1">1</span></div>
<div class="t" style="left:1473px;top:398px;color:#c00000;width:76px;text-align:right;"><span class="s1">1</span><span class="s10">.</span><span class="s1">00</span></div>
<div class="t" style="left:1553px;top:398px;color:#c00000;width:76px;text-align:right;"><span class="s1">3</span><span class="s10">.</span><span class="s1">18</span></div>
<div style="left:1004px;top:413px;width:638px;height:1px;background:#e0e0e0"></div>
<div style="left:1004px;top:414px;width:638px;height:19px;background:#f2f2f2"></div>
<div class="t" style="left:1020px;top:417px;color:#000;"><span class="s1">2019</span><span class="s10">/</span><span class="s1">06</span><span class="s10">/</span><span class="s1">27</span><span class="s17"> </span><span class="s1">14</span><span class="s10">:</span><span class="s1">46</span></div>
<div class="t" style="left:1139px;top:417px;color:#000;"><span class="s3">매수청산</span></div>
<div class="t" style="left:1196px;top:417px;color:#000;"><span class="s11">StopEndOfDay</span></div>
<div class="t" style="left:1313px;top:417px;color:#000;width:76px;text-align:right;"><span class="s1">278</span><span class="s10">.</span><span class="s1">34</span></div>
<div class="t" style="left:1393px;top:417px;color:#c00000;width:76px;text-align:right;"><span class="s1">2</span><span class="s10">.</span><span class="s1">74</span></div>
<div class="t" style="left:1473px;top:417px;color:#000080;width:76px;text-align:right;"><span class="s4">-</span><span class="s1">46</span><span class="s10">.</span><span class="s1">77</span></div>
<div class="t" style="left:1553px;top:417px;color:#000080;width:76px;text-align:right;"><span class="s4">-</span><span class="s1">0</span><span class="s10">.</span><span class="s1">40</span></div>
<div style="left:1004px;top:432px;width:638px;height:1px;background:#1c2a6c"></div>
<div style="left:1004px;top:433px;width:638px;height:19px;background:#fff"></div>
<div class="t" style="left:1020px;top:436px;color:#000;"><span class="s1">2019</span><span class="s10">/</span><span class="s1">06</span><span class="s10">/</span><span class="s1">28</span><span class="s17"> </span><span class="s1">09</span><span class="s10">:</span><span class="s1">06</span></div>
<div class="t" style="left:1139px;top:436px;color:#000;"><span class="s3">매수</span></div>
<div class="t" style="left:1196px;top:436px;color:#000;"><span class="s9">_</span><span class="s21">BuyNo1</span></div>
<div class="t" style="left:1313px;top:436px;color:#000;width:76px;text-align:right;"><span class="s1">278</span><span class="s10">.</span><span class="s1">34</span></div>
<div class="t" style="left:1393px;top:436px;color:#000;width:76px;text-align:right;"><span class="s1">1</span></div>
<div class="t" style="left:1473px;top:436px;color:#000080;width:76px;text-align:right;"><span class="s4">-</span><span class="s1">0</span><span class="s10">.</span><span class="s1">40</span></div>
<div class="t" style="left:1553px;top:436px;color:#c00000;width:76px;text-align:right;"><span class="s1">0</span><span class="s10">.</span><span class="s1">24</span></div>
<div style="left:1004px;top:451px;width:638px;height:1px;background:#e0e0e0"></div>
<div style="left:1004px;top:452px;width:638px;height:19px;background:#f2f2f2"></div>
<div class="t" style="left:1020px;top:455px;color:#000;"><span class="s1">2019</span><span class="s10">/</span><span class="s1">06</span><span class="s10">/</span><span class="s1">28</span><span class="s17"> </span><span class="s1">14</span><span class="s10">:</span><span class="s1">46</span></div>
<div class="t" style="left:1139px;top:455px;color:#000;"><span class="s3">매수청산</span></div>
<div class="t" style="left:1196px;top:455px;color:#000;"><span class="s11">StopEndOfDay</span></div>
<div class="t" style="left:1313px;top:455px;color:#000;width:76px;text-align:right;"><span class="s1">277</span><span class="s10">.</span><span class="s1">32</span></div>
<div class="t" style="left:1393px;top:455px;color:#000080;width:76px;text-align:right;"><span class="s4">-</span><span class="s1">1</span><span class="s10">.</span><span class="s1">12</span></div>
<div class="t" style="left:1473px;top:455px;color:#000080;width:76px;text-align:right;"><span class="s4">-</span><span class="s1">47</span><span class="s10">.</span><span class="s1">89</span></div>
<div class="t" style="left:1553px;top:455px;color:#000080;width:76px;text-align:right;"><span class="s4">-</span><span class="s1">1</span><span class="s10">.</span><span class="s1">60</span></div>
<div style="left:1004px;top:470px;width:638px;height:1px;background:#1c2a6c"></div>
<div style="left:1004px;top:471px;width:638px;height:19px;background:#fff"></div>
<div class="t" style="left:1020px;top:474px;color:#000;"><span class="s1">2019</span><span class="s10">/</span><span class="s1">07</span><span class="s10">/</span><span class="s1">02</span><span class="s17"> </span><span class="s1">09</span><span class="s10">:</span><span class="s1">01</span></div>
<div class="t" style="left:1139px;top:474px;color:#000;"><span class="s3">매수</span></div>
<div class="t" style="left:1196px;top:474px;color:#000;"><span class="s9">_</span><span class="s21">BuyNo1</span></div>
<div class="t" style="left:1313px;top:474px;color:#000;width:76px;text-align:right;"><span class="s1">276</span><span class="s10">.</span><span class="s1">04</span></div>
<div class="t" style="left:1393px;top:474px;color:#000;width:76px;text-align:right;"><span class="s1">1</span></div>
<div class="t" style="left:1473px;top:474px;color:#c00000;width:76px;text-align:right;"><span class="s1">0</span><span class="s10">.</span><span class="s1">02</span></div>
<div class="t" style="left:1553px;top:474px;color:#c00000;width:76px;text-align:right;"><span class="s1">1</span><span class="s10">.</span><span class="s1">50</span></div>
<div style="left:1004px;top:489px;width:638px;height:1px;background:#e0e0e0"></div>
<div style="left:1004px;top:490px;width:638px;height:19px;background:#f2f2f2"></div>
<div class="t" style="left:1020px;top:493px;color:#000;"><span class="s1">2019</span><span class="s10">/</span><span class="s1">07</span><span class="s10">/</span><span class="s1">02</span><span class="s17"> </span><span class="s1">14</span><span class="s10">:</span><span class="s1">46</span></div>
<div class="t" style="left:1139px;top:493px;color:#000;"><span class="s3">매수청산</span></div>
<div class="t" style="left:1196px;top:493px;color:#000;"><span class="s11">StopEndOfDay</span></div>
<div class="t" style="left:1313px;top:493px;color:#000;width:76px;text-align:right;"><span class="s1">276</span><span class="s10">.</span><span class="s1">20</span></div>
<div class="t" style="left:1393px;top:493px;color:#c00000;width:76px;text-align:right;"><span class="s1">0</span><span class="s10">.</span><span class="s1">06</span></div>
<div class="t" style="left:1473px;top:493px;color:#000080;width:76px;text-align:right;"><span class="s4">-</span><span class="s1">47</span><span class="s10">.</span><span class="s1">82</span></div>
<div class="t" style="left:1553px;top:493px;color:#000080;width:76px;text-align:right;"><span class="s4">-</span><span class="s1">1</span><span class="s10">.</span><span class="s1">38</span></div>
<div style="left:1004px;top:508px;width:638px;height:1px;background:#1c2a6c"></div>
<div style="left:1004px;top:509px;width:638px;height:19px;background:#fff"></div>
<div class="t" style="left:1020px;top:512px;color:#000;"><span class="s1">2019</span><span class="s10">/</span><span class="s1">07</span><span class="s10">/</span><span class="s1">04</span><span class="s17"> </span><span class="s1">09</span><span class="s10">:</span><span class="s1">01</span></div>
<div class="t" style="left:1139px;top:512px;color:#000;"><span class="s3">매수</span></div>
<div class="t" style="left:1196px;top:512px;color:#000;"><span class="s9">_</span><span class="s21">BuyNo1</span></div>
<div class="t" style="left:1313px;top:512px;color:#000;width:76px;text-align:right;"><span class="s1">272</span><span class="s10">.</span><span class="s1">94</span></div>
<div class="t" style="left:1393px;top:512px;color:#000;width:76px;text-align:right;"><span class="s1">1</span></div>
<div class="t" style="left:1473px;top:512px;color:#c00000;width:76px;text-align:right;"><span class="s1">0</span><span class="s10">.</span><span class="s1">41</span></div>
<div class="t" style="left:1553px;top:512px;color:#c00000;width:76px;text-align:right;"><span class="s1">1</span><span class="s10">.</span><span class="s1">26</span></div>
<div style="left:1004px;top:527px;width:638px;height:1px;background:#e0e0e0"></div>
<div style="left:1004px;top:528px;width:638px;height:19px;background:#f2f2f2"></div>
<div class="t" style="left:1020px;top:531px;color:#000;"><span class="s1">2019</span><span class="s10">/</span><span class="s1">07</span><span class="s10">/</span><span class="s1">04</span><span class="s17"> </span><span class="s1">14</span><span class="s10">:</span><span class="s1">46</span></div>
<div class="t" style="left:1139px;top:531px;color:#000;"><span class="s3">매수청산</span></div>
<div class="t" style="left:1196px;top:531px;color:#000;"><span class="s11">StopEndOfDay</span></div>
<div class="t" style="left:1313px;top:531px;color:#000;width:76px;text-align:right;"><span class="s1">274</span><span class="s10">.</span><span class="s1">16</span></div>
<div class="t" style="left:1393px;top:531px;color:#c00000;width:76px;text-align:right;"><span class="s1">1</span><span class="s10">.</span><span class="s1">12</span></div>
<div class="t" style="left:1473px;top:531px;color:#000080;width:76px;text-align:right;"><span class="s4">-</span><span class="s1">46</span><span class="s10">.</span><span class="s1">70</span></div>
<div class="t" style="left:1553px;top:531px;color:#000080;width:76px;text-align:right;"><span class="s4">-</span><span class="s1">1</span><span class="s10">.</span><span class="s1">00</span></div>
<div style="left:1004px;top:546px;width:638px;height:1px;background:#1c2a6c"></div>
<div style="left:1004px;top:547px;width:638px;height:19px;background:#3390ff"></div>
<div class="t" style="left:1020px;top:550px;color:#fff;"><span class="s1">2019</span><span class="s10">/</span><span class="s1">07</span><span class="s10">/</span><span class="s1">05</span><span class="s17"> </span><span class="s1">09</span><span class="s10">:</span><span class="s1">01</span></div>
<div class="t" style="left:1139px;top:550px;color:#fff;"><span class="s3">매수</span></div>
<div class="t" style="left:1196px;top:550px;color:#fff;"><span class="s9">_</span><span class="s21">BuyNo1</span></div>
<div class="t" style="left:1313px;top:550px;color:#fff;width:76px;text-align:right;"><span class="s1">274</span><span class="s10">.</span><span class="s1">84</span></div>
<div class="t" style="left:1393px;top:550px;color:#fff;width:76px;text-align:right;"><span class="s1">1</span></div>
<div class="t" style="left:1473px;top:550px;color:#fff;width:76px;text-align:right;"><span class="s4">-</span><span class="s1">0</span><span class="s10">.</span><span class="s1">17</span></div>
<div class="t" style="left:1553px;top:550px;color:#fff;width:76px;text-align:right;"><span class="s1">0</span><span class="s10">.</span><span class="s1">46</span></div>
<div style="left:1004px;top:565px;width:638px;height:1px;background:#e0e0e0"></div>
<div style="left:1004px;top:566px;width:638px;height:19px;background:#f2f2f2"></div>
<div class="t" style="left:1020px;top:569px;color:#000;"><span class="s1">2019</span><span class="s10">/</span><span class="s1">07</span><span class="s10">/</span><span class="s1">05</span><span class="s17"> </span><span class="s1">14</span><span class="s10">:</span><span class="s1">46</span></div>
<div class="t" style="left:1139px;top:569px;color:#000;"><span class="s3">매수청산</span></div>
<div class="t" style="left:1196px;top:569px;color:#000;"><span class="s11">StopEndOfDay</span></div>
<div class="t" style="left:1313px;top:569px;color:#000;width:76px;text-align:right;"><span class="s1">274</span><span class="s10">.</span><span class="s1">48</span></div>
<div class="t" style="left:1393px;top:569px;color:#000080;width:76px;text-align:right;"><span class="s4">-</span><span class="s1">0</span><span class="s10">.</span><span class="s1">46</span></div>
<div class="t" style="left:1473px;top:569px;color:#000080;width:76px;text-align:right;"><span class="s4">-</span><span class="s1">47</span><span class="s10">.</span><span class="s1">16</span></div>
<div class="t" style="left:1553px;top:569px;color:#000080;width:76px;text-align:right;"><span class="s4">-</span><span class="s1">2</span><span class="s10">.</span><span class="s1">36</span></div>
<div style="left:1004px;top:584px;width:638px;height:1px;background:#e0e0e0"></div>
<div style="left:1132px;top:129px;width:1px;height:470px;background:#d4d4d4;mix-blend-mode:multiply"></div>
<div style="left:1188px;top:129px;width:1px;height:470px;background:#d4d4d4;mix-blend-mode:multiply"></div>
<div style="left:1312px;top:129px;width:1px;height:470px;background:#d4d4d4;mix-blend-mode:multiply"></div>
<div style="left:1392px;top:129px;width:1px;height:470px;background:#d4d4d4;mix-blend-mode:multiply"></div>
<div style="left:1472px;top:129px;width:1px;height:470px;background:#d4d4d4;mix-blend-mode:multiply"></div>
<div style="left:1552px;top:129px;width:1px;height:470px;background:#d4d4d4;mix-blend-mode:multiply"></div>
<div style="left:1632px;top:129px;width:1px;height:470px;background:#d4d4d4;mix-blend-mode:multiply"></div>
<div style="left:1004px;top:599px;width:638px;height:10px;background:#f0f0f0"></div>
<div style="left:1004px;top:599px;width:10px;height:10px;background:#fafafa;border-right:1px solid #c8c8c8;box-sizing:border-box"></div>
<svg style="left:1010px;top:602px" width="4" height="5"><path d="M3 0V5L0 2.5Z" fill="#000"/></svg>
<div style="left:1014px;top:599px;width:544px;height:9px;background:#fdfdfd;border-right:1px solid #a0a0a0;border-bottom:1px solid #a0a0a0;box-sizing:border-box"></div>
<div style="left:1632px;top:599px;width:10px;height:10px;background:#fafafa;border-left:1px solid #c8c8c8;box-sizing:border-box"></div>
<svg style="left:1636px;top:602px" width="4" height="5"><path d="M0 0V5L3 2.5Z" fill="#000"/></svg>
<div style="left:1642px;top:90px;width:9px;height:520px;background:#f0f0f0;border-left:1px solid #c8c8c8;box-sizing:border-box"></div>
<div style="left:1642px;top:92px;width:9px;height:11px;background:#fafafa;border-bottom:2px solid #606060;box-sizing:border-box"></div>
<svg style="left:1645px;top:96px" width="5" height="4"><path d="M0 3H5L2.5 0Z" fill="#000"/></svg>
<div style="left:1642px;top:586px;width:9px;height:2px;background:#808080"></div>
<svg style="left:1645px;top:593px" width="5" height="4"><path d="M0 0H5L2.5 3Z" fill="#000"/></svg>
<div style="left:1641px;top:599px;width:10px;height:11px;background:#f4f4f4"></div>
<div style="left:1003px;top:609px;width:648px;height:2px;background:#8a8f96"></div>
<div style="left:1000px;top:611px;width:651px;height:3px;background:#a6c4e0"></div>
<div style="left:998px;top:614px;width:653px;height:2px;background:#dde6f0"></div>
<div style="left:998px;top:616px;width:653px;height:18px;background:#a6c4e0"></div>
<div style="left:1000px;top:616px;width:42px;height:18px;background:#b6b0a4;border:1px solid #7a766e;border-top:none;border-radius:0 0 4px 4px;box-sizing:border-box"></div>
<div class="t" style="left:1000px;top:618px;color:#000;width:42px;text-align:center;"><span class="s3">종합</span></div>
<div style="left:1043px;top:616px;width:59px;height:18px;background:#fff;border-radius:0 0 3px 3px"></div>
<div class="t" style="left:1043px;top:618px;color:#000;width:59px;text-align:center;"><span class="s3">거래내역</span></div>
<div style="left:1102px;top:616px;width:60px;height:18px;background:#b6b0a4;border:1px solid #7a766e;border-top:none;border-radius:0 0 4px 4px;box-sizing:border-box"></div>
<div class="t" style="left:1102px;top:618px;color:#000;width:60px;text-align:center;"><span class="s3">기간분석</span></div>
<div style="left:1162px;top:616px;width:60px;height:18px;background:#b6b0a4;border:1px solid #7a766e;border-top:none;border-radius:0 0 4px 4px;box-sizing:border-box"></div>
<div class="t" style="left:1162px;top:618px;color:#000;width:60px;text-align:center;"><span class="s3">전략분석</span></div>
<div style="left:1222px;top:616px;width:85px;height:18px;background:#b6b0a4;border:1px solid #7a766e;border-top:none;border-radius:0 0 4px 4px;box-sizing:border-box"></div>
<div class="t" style="left:1222px;top:618px;color:#000;width:85px;text-align:center;"><span class="s3">수익손실거래</span></div>
<div style="left:1307px;top:616px;width:47px;height:18px;background:#b6b0a4;border:1px solid #7a766e;border-top:none;border-radius:0 0 4px 4px;box-sizing:border-box"></div>
<div class="t" style="left:1307px;top:618px;color:#000;width:47px;text-align:center;"><span class="s3">그래프</span></div>
<div style="left:1354px;top:616px;width:42px;height:18px;background:#b6b0a4;border:1px solid #7a766e;border-top:none;border-radius:0 0 4px 4px;box-sizing:border-box"></div>
<div class="t" style="left:1354px;top:618px;color:#000;width:42px;text-align:center;"><span class="s3">설정</span></div>
<div style="left:997px;top:634px;width:654px;height:2px;background:#8c949c"></div>
</body></html>
